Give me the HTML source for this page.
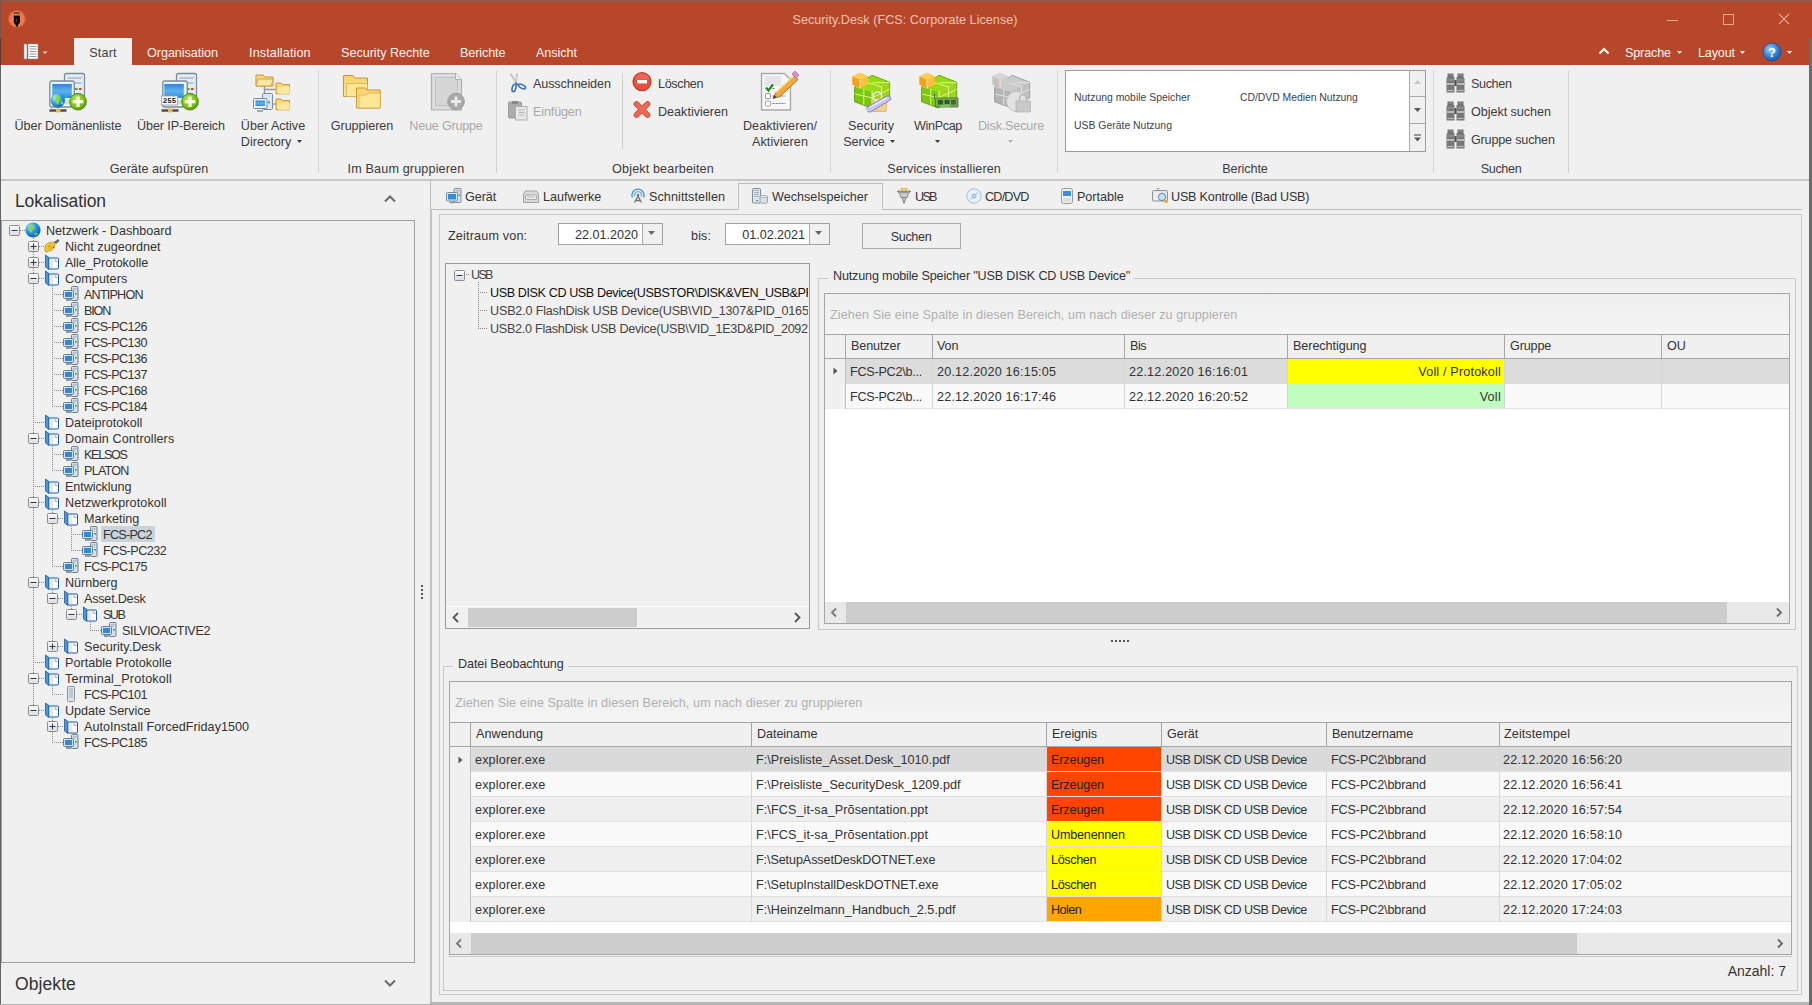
<!DOCTYPE html><html><head><meta charset="utf-8"><style>
html,body{margin:0;padding:0;width:1812px;height:1005px;overflow:hidden;background:#f0f0f0;font-family:"Liberation Sans", sans-serif;}
</style></head><body>
<div style="position:absolute;left:0px;top:0px;width:1812px;height:65px;background:#b7472a;"></div>
<div style="position:absolute;left:0px;top:0px;width:1812px;height:1px;background:#85604f;"></div>
<div style="position:absolute;left:0px;top:1px;width:1812px;height:1px;background:#a8503a;"></div>
<svg style="position:absolute;left:6px;top:8px;" width="22" height="22" viewBox="0 0 22 22"><circle cx="10.9" cy="10.9" r="9" fill="#d95a2e"/><circle cx="10.9" cy="10.9" r="7.8" fill="#ec7a4e"/><path d="M8.2 4h5.3v4H8.2z" fill="#7a4530"/><path d="M9 6h1.5v1H9zM11.2 6h1.5v1h-1.5z" fill="#f3c0a0"/><path d="M7.8 8h6.1v6.5l-1.6 2.2-1.4 2.8-1.4-2.8-1.7-2.2z" fill="#0a0503"/><path d="M10.6 10.5v3" stroke="#8a6a40" stroke-width="0.7"/></svg>
<div style="position:absolute;left:905px;transform:translateX(-50%);top:13px;font-size:12.6px;line-height:14px;color:#f1c3ae;white-space:nowrap;font-weight:normal;letter-spacing:0.032px;">Security.Desk (FCS: Corporate License)</div>
<div style="position:absolute;left:1667px;top:20px;width:11px;height:1px;background:#e9a58c;"></div>
<div style="position:absolute;left:1723px;top:14px;width:11px;height:11px;box-sizing:border-box;border:1px solid #e9a58c;background:transparent;"></div>
<svg style="position:absolute;left:1778px;top:13px;" width="12" height="12" viewBox="0 0 12 12"><path d="M1 1L11 11M11 1L1 11" stroke="#e9a58c" stroke-width="1.1"/></svg>
<svg style="position:absolute;left:22px;top:43px;" width="26" height="18" viewBox="0 0 26 18"><rect x="2" y="1" width="3" height="15" fill="#fff" stroke="#8a8a8a" stroke-width="0.6"/><rect x="6" y="1" width="10" height="15" fill="#fff" stroke="#8a8a8a" stroke-width="0.6"/><path d="M7.5 3.5h7M7.5 6h7M7.5 8.5h7M7.5 11h7M7.5 13.5h7" stroke="#8c8c8c" stroke-width="0.9"/><path d="M20.5 8.5h5l-2.5 2.5z" fill="#f5d5c8"/></svg>
<div style="position:absolute;left:74px;top:38px;width:58px;height:27px;background:#f0f0f0;"></div>
<div style="position:absolute;left:103px;transform:translateX(-50%);top:46px;font-size:12.6px;line-height:14px;color:#444;white-space:nowrap;font-weight:normal;letter-spacing:0.175px;">Start</div>
<div style="position:absolute;left:147px;top:46px;font-size:12.6px;line-height:14px;color:#fff3ee;white-space:nowrap;font-weight:normal;letter-spacing:-0.036px;">Organisation</div>
<div style="position:absolute;left:249px;top:46px;font-size:12.6px;line-height:14px;color:#fff3ee;white-space:nowrap;font-weight:normal;letter-spacing:0.127px;">Installation</div>
<div style="position:absolute;left:341px;top:46px;font-size:12.6px;line-height:14px;color:#fff3ee;white-space:nowrap;font-weight:normal;letter-spacing:-0.007px;">Security Rechte</div>
<div style="position:absolute;left:460px;top:46px;font-size:12.6px;line-height:14px;color:#fff3ee;white-space:nowrap;font-weight:normal;letter-spacing:-0.100px;">Berichte</div>
<div style="position:absolute;left:536px;top:46px;font-size:12.6px;line-height:14px;color:#fff3ee;white-space:nowrap;font-weight:normal;letter-spacing:-0.050px;">Ansicht</div>
<svg style="position:absolute;left:1598px;top:47px;" width="12" height="8" viewBox="0 0 12 8"><path d="M1.5 6.5L6 2l4.5 4.5" stroke="#fff" stroke-width="2" fill="none"/></svg>
<div style="position:absolute;left:1625px;top:46px;font-size:12.6px;line-height:14px;color:#fff3ee;white-space:nowrap;font-weight:normal;letter-spacing:-0.150px;">Sprache</div>
<svg style="position:absolute;left:1677px;top:51px;" width="5" height="3" viewBox="0 0 5 3"><path d="M0 0h5L2.5 3z" fill="#fff3ee"/></svg>
<div style="position:absolute;left:1698px;top:46px;font-size:12.6px;line-height:14px;color:#fff3ee;white-space:nowrap;font-weight:normal;letter-spacing:-0.160px;">Layout</div>
<svg style="position:absolute;left:1740px;top:51px;" width="5" height="3" viewBox="0 0 5 3"><path d="M0 0h5L2.5 3z" fill="#fff3ee"/></svg>
<svg style="position:absolute;left:1762px;top:42px;" width="20" height="20" viewBox="0 0 20 20"><defs><radialGradient id="hg" cx="40%" cy="35%" r="70%"><stop offset="0" stop-color="#9fd0ff"/><stop offset="0.6" stop-color="#2f7fd8"/><stop offset="1" stop-color="#14509e"/></radialGradient></defs><circle cx="10" cy="10" r="9" fill="url(#hg)" stroke="#1d4f8f" stroke-width="0.8"/><text x="10" y="14.5" font-size="13" font-weight="bold" text-anchor="middle" fill="#fff" font-family="Liberation Sans">?</text></svg>
<svg style="position:absolute;left:1787px;top:51px;" width="5" height="3" viewBox="0 0 5 3"><path d="M0 0h5L2.5 3z" fill="#fff3ee"/></svg>
<div style="position:absolute;left:0px;top:65px;width:1812px;height:114px;background:#f0f0f0;"></div>
<div style="position:absolute;left:0px;top:179px;width:1812px;height:2px;background:#c6c6c6;"></div>
<div style="position:absolute;left:318px;top:71px;width:1px;height:102px;background:#d2d2d2;"></div>
<div style="position:absolute;left:496px;top:71px;width:1px;height:102px;background:#d2d2d2;"></div>
<div style="position:absolute;left:830px;top:71px;width:1px;height:102px;background:#d2d2d2;"></div>
<div style="position:absolute;left:1057px;top:71px;width:1px;height:102px;background:#d2d2d2;"></div>
<div style="position:absolute;left:1433px;top:71px;width:1px;height:102px;background:#d2d2d2;"></div>
<div style="position:absolute;left:1568px;top:71px;width:1px;height:102px;background:#d2d2d2;"></div>
<div style="position:absolute;left:622px;top:73px;width:1px;height:77px;background:#cfcfcf;"></div>
<div style="position:absolute;left:159px;transform:translateX(-50%);top:162px;font-size:12.6px;line-height:14px;color:#3c3c3c;white-space:nowrap;font-weight:normal;letter-spacing:0.027px;">Geräte aufspüren</div>
<div style="position:absolute;left:406px;transform:translateX(-50%);top:162px;font-size:12.6px;line-height:14px;color:#3c3c3c;white-space:nowrap;font-weight:normal;letter-spacing:0.153px;">Im Baum gruppieren</div>
<div style="position:absolute;left:663px;transform:translateX(-50%);top:162px;font-size:12.6px;line-height:14px;color:#3c3c3c;white-space:nowrap;font-weight:normal;letter-spacing:0.138px;">Objekt bearbeiten</div>
<div style="position:absolute;left:944px;transform:translateX(-50%);top:162px;font-size:12.6px;line-height:14px;color:#3c3c3c;white-space:nowrap;font-weight:normal;letter-spacing:0.080px;">Services installieren</div>
<div style="position:absolute;left:1245px;transform:translateX(-50%);top:162px;font-size:12.6px;line-height:14px;color:#3c3c3c;white-space:nowrap;font-weight:normal;letter-spacing:-0.100px;">Berichte</div>
<div style="position:absolute;left:1501px;transform:translateX(-50%);top:162px;font-size:12.6px;line-height:14px;color:#3c3c3c;white-space:nowrap;font-weight:normal;letter-spacing:-0.360px;">Suchen</div>
<div style="position:absolute;left:68px;transform:translateX(-50%);top:119px;font-size:12.6px;line-height:14px;color:#3c3c3c;white-space:nowrap;font-weight:normal;letter-spacing:-0.056px;">Über Domänenliste</div>
<div style="position:absolute;left:181px;transform:translateX(-50%);top:119px;font-size:12.6px;line-height:14px;color:#3c3c3c;white-space:nowrap;font-weight:normal;letter-spacing:-0.114px;">Über IP-Bereich</div>
<div style="position:absolute;left:273px;transform:translateX(-50%);top:119px;font-size:12.6px;line-height:14px;color:#3c3c3c;white-space:nowrap;font-weight:normal;letter-spacing:-0.010px;">Über Active</div>
<div style="position:absolute;left:266px;transform:translateX(-50%);top:135px;font-size:12.6px;line-height:14px;color:#3c3c3c;white-space:nowrap;font-weight:normal;">Directory</div>
<div style="position:absolute;left:362px;transform:translateX(-50%);top:119px;font-size:12.6px;line-height:14px;color:#3c3c3c;white-space:nowrap;font-weight:normal;letter-spacing:-0.056px;">Gruppieren</div>
<div style="position:absolute;left:446px;transform:translateX(-50%);top:119px;font-size:12.6px;line-height:14px;color:#a8a8a8;white-space:nowrap;font-weight:normal;letter-spacing:-0.210px;">Neue Gruppe</div>
<div style="position:absolute;left:533px;top:77px;font-size:12.6px;line-height:14px;color:#3c3c3c;white-space:nowrap;font-weight:normal;letter-spacing:-0.109px;">Ausschneiden</div>
<div style="position:absolute;left:533px;top:105px;font-size:12.6px;line-height:14px;color:#a8a8a8;white-space:nowrap;font-weight:normal;letter-spacing:-0.143px;">Einfügen</div>
<div style="position:absolute;left:658px;top:77px;font-size:12.6px;line-height:14px;color:#3c3c3c;white-space:nowrap;font-weight:normal;letter-spacing:-0.350px;">Löschen</div>
<div style="position:absolute;left:658px;top:105px;font-size:12.6px;line-height:14px;color:#3c3c3c;white-space:nowrap;font-weight:normal;letter-spacing:0.000px;">Deaktivieren</div>
<div style="position:absolute;left:780px;transform:translateX(-50%);top:119px;font-size:12.6px;line-height:14px;color:#3c3c3c;white-space:nowrap;font-weight:normal;letter-spacing:0.042px;">Deaktivieren/</div>
<div style="position:absolute;left:780px;transform:translateX(-50%);top:135px;font-size:12.6px;line-height:14px;color:#3c3c3c;white-space:nowrap;font-weight:normal;letter-spacing:0.078px;">Aktivieren</div>
<div style="position:absolute;left:871px;transform:translateX(-50%);top:119px;font-size:12.6px;line-height:14px;color:#3c3c3c;white-space:nowrap;font-weight:normal;letter-spacing:0.071px;">Security</div>
<div style="position:absolute;left:864px;transform:translateX(-50%);top:135px;font-size:12.6px;line-height:14px;color:#3c3c3c;white-space:nowrap;font-weight:normal;letter-spacing:-0.083px;">Service</div>
<div style="position:absolute;left:938px;transform:translateX(-50%);top:119px;font-size:12.6px;line-height:14px;color:#3c3c3c;white-space:nowrap;font-weight:normal;letter-spacing:-0.333px;">WinPcap</div>
<div style="position:absolute;left:1011px;transform:translateX(-50%);top:119px;font-size:12.6px;line-height:14px;color:#a8a8a8;white-space:nowrap;font-weight:normal;letter-spacing:-0.160px;">Disk.Secure</div>
<svg style="position:absolute;left:297px;top:140px;" width="5" height="3" viewBox="0 0 5 3"><path d="M0 0h5L2.5 3z" fill="#3c3c3c"/></svg>
<svg style="position:absolute;left:890px;top:140px;" width="5" height="3" viewBox="0 0 5 3"><path d="M0 0h5L2.5 3z" fill="#3c3c3c"/></svg>
<svg style="position:absolute;left:935px;top:140px;" width="5" height="3" viewBox="0 0 5 3"><path d="M0 0h5L2.5 3z" fill="#3c3c3c"/></svg>
<svg style="position:absolute;left:1008px;top:140px;" width="5" height="3" viewBox="0 0 5 3"><path d="M0 0h5L2.5 3z" fill="#b0b0b0"/></svg>
<div style="position:absolute;left:1065px;top:70px;width:361px;height:82px;box-sizing:border-box;border:1px solid #9c9c9c;background:#fff;"></div>
<div style="position:absolute;left:1410px;top:71px;width:15px;height:80px;background:#f0f0f0;"></div>
<div style="position:absolute;left:1409px;top:71px;width:1px;height:80px;background:#a8a8a8;"></div>
<div style="position:absolute;left:1410px;top:96px;width:15px;height:1px;background:#a8a8a8;"></div>
<div style="position:absolute;left:1410px;top:123px;width:15px;height:1px;background:#a8a8a8;"></div>
<svg style="position:absolute;left:1414px;top:80px;" width="7" height="4" viewBox="0 0 7 4"><path d="M0 4h7L3.5 0z" fill="#c4c4c4"/></svg>
<svg style="position:absolute;left:1414px;top:108px;" width="7" height="4" viewBox="0 0 7 4"><path d="M0 0h7L3.5 4z" fill="#5a5a5a"/></svg>
<svg style="position:absolute;left:1414px;top:134px;" width="7" height="8" viewBox="0 0 7 8"><path d="M0 1h7" stroke="#5a5a5a" stroke-width="1.2"/><path d="M0 3.5h7L3.5 7.5z" fill="#5a5a5a"/></svg>
<div style="position:absolute;left:1074px;top:92px;font-size:10.4px;line-height:11px;color:#3b4150;white-space:nowrap;font-weight:normal;letter-spacing:0.009px;">Nutzung mobile Speicher</div>
<div style="position:absolute;left:1240px;top:92px;font-size:10.4px;line-height:11px;color:#3b4150;white-space:nowrap;font-weight:normal;letter-spacing:-0.025px;">CD/DVD Medien Nutzung</div>
<div style="position:absolute;left:1074px;top:120px;font-size:10.4px;line-height:11px;color:#3b4150;white-space:nowrap;font-weight:normal;letter-spacing:0.018px;">USB Geräte Nutzung</div>
<div style="position:absolute;left:1471px;top:77px;font-size:12.6px;line-height:14px;color:#3c3c3c;white-space:nowrap;font-weight:normal;letter-spacing:-0.360px;">Suchen</div>
<div style="position:absolute;left:1471px;top:105px;font-size:12.6px;line-height:14px;color:#3c3c3c;white-space:nowrap;font-weight:normal;letter-spacing:-0.042px;">Objekt suchen</div>
<div style="position:absolute;left:1471px;top:133px;font-size:12.6px;line-height:14px;color:#3c3c3c;white-space:nowrap;font-weight:normal;letter-spacing:-0.183px;">Gruppe suchen</div>
<svg width="0" height="0" style="position:absolute"><defs>
<linearGradient id="scr" x1="0" y1="0" x2="0" y2="1"><stop offset="0" stop-color="#2f86da"/><stop offset="0.5" stop-color="#5fb0ee"/><stop offset="1" stop-color="#2a90e0"/></linearGradient>
<radialGradient id="plus" cx="40%" cy="35%" r="70%"><stop offset="0" stop-color="#b4e64a"/><stop offset="0.7" stop-color="#78bd15"/><stop offset="1" stop-color="#4f8f0c"/></radialGradient>
<linearGradient id="fold" x1="0" y1="0" x2="0" y2="1"><stop offset="0" stop-color="#f7d36a"/><stop offset="1" stop-color="#fbe48f"/></linearGradient>
<radialGradient id="glb" cx="35%" cy="30%" r="75%"><stop offset="0" stop-color="#c7f3ff"/><stop offset="0.5" stop-color="#34a6de"/><stop offset="1" stop-color="#0f64a8"/></radialGradient>
</defs></svg>
<svg style="position:absolute;left:44px;top:68px;" width="50" height="48" viewBox="0 0 50 48"><rect x="20.5" y="5.5" width="20" height="30" rx="2" fill="#e4ecf3" stroke="#7d8b99" stroke-width="1.3"/><path d="M23.5 10h14M23.5 15h14" stroke="#a9b9c8" stroke-width="1.6"/><rect x="31" y="20" width="2.6" height="2" fill="#3cae2c"/><rect x="35" y="20" width="2.6" height="2" fill="#d23a3a"/><rect x="5.8" y="13" width="24.5" height="26" rx="2" fill="#e8f1f8" stroke="#7d8b99" stroke-width="1.3"/><rect x="8.3" y="16" width="19.5" height="14" fill="url(#scr)"/><rect x="9" y="32" width="18" height="4" fill="#d5dde4"/><path d="M5.5 42.5h17" stroke="#555" stroke-width="2.6"/><rect x="12" y="40.5" width="4.5" height="4" rx="1" fill="#f0b54a"/><circle cx="13.8" cy="32.5" r="7.2" fill="url(#glb)"/><path d="M12 26.5c2.5 1 4 3 3.5 5.5-1 1.5-.5 3.5-2 4.5-1.5-1-2.5-3-2-5-.8-2 0-3.5.5-5z" fill="#8fdc24"/><path d="M17 33c1.5.5 2.5 1.5 2.5 3-1 .5-2 .5-2.5 0z" fill="#8fdc24"/><circle cx="34" cy="33.7" r="8.3" fill="url(#plus)" stroke="#4d8a0c" stroke-width="1"/><path d="M34 28.5v10.5M28.8 33.7h10.5" stroke="#fbffe8" stroke-width="3.2"/></svg>
<svg style="position:absolute;left:156px;top:68px;" width="50" height="48" viewBox="0 0 50 48"><rect x="20.5" y="5.5" width="20" height="30" rx="2" fill="#e4ecf3" stroke="#7d8b99" stroke-width="1.3"/><path d="M23.5 10h14M23.5 15h14" stroke="#a9b9c8" stroke-width="1.6"/><rect x="31" y="20" width="2.6" height="2" fill="#3cae2c"/><rect x="35" y="20" width="2.6" height="2" fill="#d23a3a"/><rect x="6.8" y="13" width="24.5" height="26" rx="2" fill="#e8f1f8" stroke="#7d8b99" stroke-width="1.3"/><rect x="8.3" y="16" width="19.5" height="14" fill="url(#scr)"/><rect x="9" y="32" width="18" height="4" fill="#d5dde4"/><path d="M5.5 42.5h17" stroke="#555" stroke-width="2.6"/><rect x="12" y="40.5" width="4.5" height="4" rx="1" fill="#f0b54a"/><rect x="5.5" y="28" width="16" height="9" fill="#fff" stroke="#999" stroke-width="0.8"/><text x="13.5" y="35.3" font-size="7.5" font-weight="bold" text-anchor="middle" fill="#222" font-family="Liberation Mono">255</text><circle cx="34" cy="33.7" r="8.3" fill="url(#plus)" stroke="#4d8a0c" stroke-width="1"/><path d="M34 28.5v10.5M28.8 33.7h10.5" stroke="#fbffe8" stroke-width="3.2"/></svg>
<svg style="position:absolute;left:248px;top:68px;" width="50" height="48" viewBox="0 0 50 48"><path d="M16.5 18v7.5M16.5 21.5h11M22 36h5.7" stroke="#9a9a9a" stroke-width="1.5"/><path d="M8 7h7l2 2h8v9H8z" fill="url(#fold)" stroke="#c9963a" stroke-width="1"/><path d="M10 11h15.5l-2.5 7H8z" fill="#fbe7a0" stroke="#c9963a" stroke-width="0.8"/><path d="M28 15h5l1.5 1.5h7v9.3H28z" fill="url(#fold)" stroke="#c9963a" stroke-width="1"/><path d="M30.5 19h11.2v6.8H30.5z" fill="#fde9a0"/><path d="M28 31h5l1.5 1.5h7v9.3H28z" fill="url(#fold)" stroke="#c9963a" stroke-width="1"/><path d="M30.5 35h11.2v6.8H30.5z" fill="#fde9a0"/><rect x="14.5" y="25.5" width="10" height="16" rx="1" fill="#dfe7ee" stroke="#7d8b99" stroke-width="1"/><rect x="20" y="33.5" width="2" height="1.8" fill="#3cae2c"/><rect x="5.5" y="30.5" width="13.5" height="10" rx="1" fill="#e8f1f8" stroke="#7d8b99" stroke-width="1"/><rect x="7.5" y="32.5" width="9.5" height="5.5" fill="url(#scr)"/><path d="M9 43h6" stroke="#8a9aaa" stroke-width="1.6"/></svg>
<svg style="position:absolute;left:338px;top:68px;" width="50" height="48" viewBox="0 0 50 48"><path d="M5.5 7.5h9.5l1.5 2.5h13v18.5h-24z" fill="url(#fold)" stroke="#c9963a" stroke-width="1"/><path d="M8.5 15.5h21v13h-21z" fill="#fde795" stroke="#d0a040" stroke-width="0.6"/><path d="M18.5 20h9l1.5 2h13.3v18H18.5z" fill="url(#fold)" stroke="#c9963a" stroke-width="1"/><path d="M21 27h7.5l1.5-2h12.3v15H21z" fill="#fde795" stroke="#d0a040" stroke-width="0.6"/></svg>
<svg style="position:absolute;left:424px;top:68px;" width="50" height="48" viewBox="0 0 50 48"><path d="M7.5 5.5h24l6 6v30.5h-30z" fill="#dcdcdc" stroke="#b0b0b0" stroke-width="1.2"/><rect x="11.5" y="9.5" width="22" height="28" fill="#d6d6d6" stroke="#bcbcbc" stroke-width="0.8"/><path d="M31.5 5.5v6h6" fill="#eee" stroke="#b0b0b0"/><circle cx="32" cy="33.5" r="8.3" fill="#a9a9a9" stroke="#999"/><path d="M32 28.5v10M27 33.5h10" stroke="#eaeaea" stroke-width="2.8"/></svg>
<svg style="position:absolute;left:755px;top:68px;" width="50" height="48" viewBox="0 0 50 48"><path d="M6.5 5.5h23l6 6v30.5h-29z" fill="#f6f7f8" stroke="#a8a8a8" stroke-width="1.4"/><path d="M9.5 8h17v10h-17z" fill="#e3e5e8"/><path d="M11 19.5l2.5 3 4.5-6" stroke="#1f8a1f" stroke-width="2.2" fill="none"/><rect x="10.5" y="25.5" width="5" height="5" rx="0.8" fill="#fff" stroke="#888" stroke-width="0.9"/><rect x="10.5" y="33" width="5" height="5" rx="0.8" fill="#fff" stroke="#999" stroke-width="0.9"/><path d="M17.5 20.5h3M17.5 28h13M17.5 35.5h13" stroke="#666" stroke-width="0.9" stroke-dasharray="2 1"/><path d="M18 30.5l3-6 18-17 4 4-18 17z" fill="#f4a93a" stroke="#8a5a10" stroke-width="0.8"/><path d="M21 24.5l18-17" stroke="#ffd98a" stroke-width="1.4"/><path d="M37 6l3-3 4 4-3 3z" fill="#d98ad8" stroke="#a860a8" stroke-width="0.6"/><path d="M18 30.5l1.5-3.3 2 2z" fill="#333"/></svg>
<svg style="position:absolute;left:846px;top:68px;" width="50" height="48" viewBox="0 0 50 48"><path d="M8.6 19L26 7.3 43.7 14.2 26.3 23.5z" fill="#97dc10"/><path d="M8.6 19v14.8L25.5 40V23.5z" fill="#7cc60e"/><path d="M25.5 23.5L43.7 14.2v15.5L25.5 40z" fill="#9fd41a"/><path d="M8.6 19L26 7.3 43.7 14.2v15.5L25.5 40 8.6 33.8z" fill="none" stroke="#5d9e0a" stroke-width="0.9"/><path d="M17.8 21v15.8M35.5 18.5v16M26.5 14.8l17 -0.3M9 26l16.8 3.8 17.9-8.5M17 13.3l18.3 5.5M26.3 23.5V40" stroke="#d8f88a" stroke-width="1" fill="none"/><path d="M6.3 8.5L14 4.8l8 3.7v8.3L14 20.2l-7.7-3.4z" fill="#f4a21e"/><path d="M14 11.8l8-3.3v8.3L14 20.2z" fill="#fcbf3e"/><path d="M6.3 8.5L14 4.8l8 3.7-8 3.3z" fill="#ffd055"/><path d="M14 11.8v8.4" stroke="#ffeab0" stroke-width="1"/><path d="M24.5 36.5l4.5-6h12.5l-1.5 13H27z" fill="#f6cf8c" stroke="#c9a060" stroke-width="0.6"/><circle cx="31.5" cy="28.3" r="4.3" fill="none" stroke="#e8e8e8" stroke-width="1.6"/><path d="M20.5 39.5l19.5-11c2.5-1.4 5.5.4 4.8 3L25.5 43.5c-2.5 1.4-6 .3-5-4z" fill="#c6c6f4" stroke="#6e6ea0" stroke-width="0.8"/><path d="M23.5 39.5l17.5-9.8" stroke="#ececff" stroke-width="1.4"/><path d="M20.5 39.5l-1.5 2.5 3 2z" fill="#e0e0e0"/></svg>
<svg style="position:absolute;left:913px;top:68px;" width="50" height="48" viewBox="0 0 50 48"><path d="M8.6 19L26 7.3 43.7 14.2 26.3 23.5z" fill="#97dc10"/><path d="M8.6 19v14.8L25.5 40V23.5z" fill="#7cc60e"/><path d="M25.5 23.5L43.7 14.2v15.5L25.5 40z" fill="#9fd41a"/><path d="M8.6 19L26 7.3 43.7 14.2v15.5L25.5 40 8.6 33.8z" fill="none" stroke="#5d9e0a" stroke-width="0.9"/><path d="M17.8 21v15.8M35.5 18.5v16M26.5 14.8l17 -0.3M9 26l16.8 3.8 17.9-8.5M17 13.3l18.3 5.5M26.3 23.5V40" stroke="#d8f88a" stroke-width="1" fill="none"/><path d="M6.3 8.5L14 4.8l8 3.7v8.3L14 20.2l-7.7-3.4z" fill="#f4a21e"/><path d="M14 11.8l8-3.3v8.3L14 20.2z" fill="#fcbf3e"/><path d="M6.3 8.5L14 4.8l8 3.7-8 3.3z" fill="#ffd055"/><path d="M14 11.8v8.4" stroke="#ffeab0" stroke-width="1"/><path d="M22.5 30h22.5v9H22.5z" fill="#6fae4a" stroke="#3a6e28" stroke-width="0.8"/><path d="M25 32h5v4.5h-5zM31.5 32h5v4h-5z" fill="#2f5a30"/><path d="M38 32h5v4.5h-5z" fill="#555"/><path d="M21.5 26v4" stroke="#3a6e28" stroke-width="1"/><path d="M27 38h10" stroke="#9ad07a" stroke-width="1.2"/></svg>
<svg style="position:absolute;left:986px;top:68px;" width="50" height="48" viewBox="0 0 50 48"><path d="M8.6 19L26 7.3 43.7 14.2 26.3 23.5z" fill="#cbcbcb"/><path d="M8.6 19v14.8L25.5 40V23.5z" fill="#b4b4b4"/><path d="M25.5 23.5L43.7 14.2v15.5L25.5 40z" fill="#bfbfbf"/><path d="M8.6 19L26 7.3 43.7 14.2v15.5L25.5 40 8.6 33.8z" fill="none" stroke="#9c9c9c" stroke-width="0.9"/><path d="M17.8 21v15.8M35.5 18.5v16M26.5 14.8l17 -0.3M9 26l16.8 3.8 17.9-8.5M17 13.3l18.3 5.5M26.3 23.5V40" stroke="#e2e2e2" stroke-width="1" fill="none"/><path d="M6.3 8.5L14 4.8l8 3.7v8.3L14 20.2l-7.7-3.4z" fill="#c2c2c2"/><path d="M14 11.8l8-3.3v8.3L14 20.2z" fill="#cdcdcd"/><path d="M6.3 8.5L14 4.8l8 3.7-8 3.3z" fill="#d6d6d6"/><path d="M14 11.8v8.4" stroke="#ffeab0" stroke-width="1"/><circle cx="30.5" cy="33.5" r="10" fill="#e2e2e2" stroke="#c4c4c4"/><path d="M30 33h14.5v11H30z" fill="#c9c9c9" stroke="#b0b0b0" stroke-width="0.7"/><path d="M33.5 33v-3.2a3.8 3.8 0 0 1 7.5 0V33" fill="none" stroke="#bdbdbd" stroke-width="1.6"/></svg>
<svg style="position:absolute;left:504px;top:70px;" width="28" height="54" viewBox="0 0 28 54"><path d="M6.5 3.5l6 10M13 3.5l-1 10" stroke="#c9c9c9" stroke-width="2"/><ellipse cx="10" cy="18" rx="1.8" ry="3.8" fill="none" stroke="#3b74b8" stroke-width="1.6" transform="rotate(15 10 18)"/><ellipse cx="18" cy="16.5" rx="3.8" ry="1.8" fill="none" stroke="#3b74b8" stroke-width="1.6" transform="rotate(25 18 16.5)"/><path d="M11.5 12.5l3 3" stroke="#3b74b8" stroke-width="1.6"/><rect x="4.5" y="32" width="13" height="16" rx="1" fill="#ababab" stroke="#9a9a9a"/><rect x="8" y="31" width="6" height="3" fill="#8a8a8a"/><rect x="11.5" y="36.5" width="11.5" height="13.5" fill="#e6e6e6" stroke="#b0b0b0"/><path d="M14.5 40h6M14.5 42.5h6M14.5 45h6" stroke="#aaa" stroke-width="0.8"/></svg>
<svg style="position:absolute;left:630px;top:70px;" width="26" height="54" viewBox="0 0 26 54"><circle cx="12" cy="11.7" r="9" fill="#e8503c" stroke="#c0392b" stroke-width="1.2"/><path d="M12 3.5a8 8 0 0 1 7.7 6H4.3A8 8 0 0 1 12 3.5z" fill="#f07565" opacity="0.6"/><rect x="7" y="10" width="10" height="3.4" fill="#fff"/><path d="M6.5 34l11 11M17.5 34l-11 11" stroke="#c84a38" stroke-width="5.6" stroke-linecap="round"/><path d="M6.5 34l11 11M17.5 34l-11 11" stroke="#ea6a55" stroke-width="4" stroke-linecap="round"/></svg>
<svg style="position:absolute;left:1442px;top:70px;" width="26" height="26" viewBox="0 0 26 26"><path d="M5.5 7.5V3.5h6v4zM15.5 7.5V3.5h6v4z" fill="#6e6e6e"/><path d="M6.5 5h4M16.5 5h4" stroke="#a8a8a8" stroke-width="0.8"/><path d="M4.5 8.5l1-1.5h7v15.5h-8z" fill="#787878"/><path d="M14.5 7h7l1 1.5v14h-8z" fill="#787878"/><rect x="12.5" y="10" width="2" height="6" fill="#4e4e4e"/><path d="M5 14h7M15 14h7" stroke="#cfcfcf" stroke-width="1.3"/><path d="M5.5 20.5h6M15.5 20.5h6" stroke="#c4c4c4" stroke-width="1"/><path d="M5.5 10h6M15.5 10h6" stroke="#a0a0a0" stroke-width="1"/></svg>
<svg style="position:absolute;left:1442px;top:98px;" width="26" height="26" viewBox="0 0 26 26"><path d="M5.5 7.5V3.5h6v4zM15.5 7.5V3.5h6v4z" fill="#6e6e6e"/><path d="M6.5 5h4M16.5 5h4" stroke="#a8a8a8" stroke-width="0.8"/><path d="M4.5 8.5l1-1.5h7v15.5h-8z" fill="#787878"/><path d="M14.5 7h7l1 1.5v14h-8z" fill="#787878"/><rect x="12.5" y="10" width="2" height="6" fill="#4e4e4e"/><path d="M5 14h7M15 14h7" stroke="#cfcfcf" stroke-width="1.3"/><path d="M5.5 20.5h6M15.5 20.5h6" stroke="#c4c4c4" stroke-width="1"/><path d="M5.5 10h6M15.5 10h6" stroke="#a0a0a0" stroke-width="1"/></svg>
<svg style="position:absolute;left:1442px;top:126px;" width="26" height="26" viewBox="0 0 26 26"><path d="M5.5 7.5V3.5h6v4zM15.5 7.5V3.5h6v4z" fill="#6e6e6e"/><path d="M6.5 5h4M16.5 5h4" stroke="#a8a8a8" stroke-width="0.8"/><path d="M4.5 8.5l1-1.5h7v15.5h-8z" fill="#787878"/><path d="M14.5 7h7l1 1.5v14h-8z" fill="#787878"/><rect x="12.5" y="10" width="2" height="6" fill="#4e4e4e"/><path d="M5 14h7M15 14h7" stroke="#cfcfcf" stroke-width="1.3"/><path d="M5.5 20.5h6M15.5 20.5h6" stroke="#c4c4c4" stroke-width="1"/><path d="M5.5 10h6M15.5 10h6" stroke="#a0a0a0" stroke-width="1"/></svg>
<svg width="0" height="0" style="position:absolute"><defs>
<symbol id="t_dev" viewBox="0 0 16 16"><rect x="8" y="0.5" width="7" height="14" rx="1" fill="#dbe4ec" stroke="#6f8193" stroke-width="0.9"/><path d="M9.5 2.5h4M9.5 4h4" stroke="#9aabbb" stroke-width="0.8"/><rect x="12.5" y="6.5" width="1.6" height="1.6" fill="#3cae2c"/><rect x="0.5" y="4.5" width="11" height="8.5" rx="1" fill="#d9ebf7" stroke="#6f8193" stroke-width="0.9"/><rect x="2" y="6" width="8" height="5.5" fill="#2b8fe0"/><path d="M3.5 14.5h5" stroke="#7e93a6" stroke-width="1.4"/></symbol>
<symbol id="t_drive" viewBox="0 0 16 16"><path d="M2.5 3h11l2 3v8.5H0.5V6z" fill="#dadada" stroke="#9a9a9a" stroke-width="0.9"/><rect x="2.5" y="7" width="11" height="4.5" rx="0.5" fill="#efefef" stroke="#9a9a9a" stroke-width="0.8"/><path d="M4 9h8" stroke="#b5b5b5" stroke-width="1"/></symbol>
<symbol id="t_iface" viewBox="0 0 16 16"><path d="M2.5 9.5a6 6 0 1 1 11 0" fill="none" stroke="#4e92d0" stroke-width="1.4"/><path d="M4.8 8.5a3.5 3.5 0 1 1 6.4 0" fill="none" stroke="#6aaae0" stroke-width="1.2"/><circle cx="8" cy="7" r="1.3" fill="#777"/><path d="M8 8l-3.5 6.5M8 8l3.5 6.5M5.5 12.5h5" stroke="#707070" stroke-width="1.3" fill="none"/></symbol>
<symbol id="t_wech" viewBox="0 0 16 16"><rect x="0.5" y="0.5" width="8" height="14.5" rx="1" fill="#dde6ee" stroke="#6f8193" stroke-width="0.9"/><path d="M2 2.5h5M2 4.5h5M2 6.5h5M2 8.5h5" stroke="#8fa3b5" stroke-width="0.8"/><rect x="4" y="12" width="2" height="1" fill="#3cae2c"/><path d="M8 8.5c0-1 7.5-1 7.5 0v6c0 1-7.5 1-7.5 0z" fill="#d8dfe6" stroke="#8a98a6" stroke-width="0.8"/><ellipse cx="11.75" cy="8.5" rx="3.75" ry="1" fill="#eef2f6" stroke="#8a98a6" stroke-width="0.6"/></symbol>
<symbol id="t_usb" viewBox="0 0 16 16"><rect x="5" y="0.5" width="6" height="2.5" fill="#f3d27a" stroke="#c9a040" stroke-width="0.6"/><path d="M1 3.5h14M2.5 2v3M13.5 2v3" stroke="#8a8a8a" stroke-width="1.2"/><path d="M3.5 4.5h9l-1 5h-7z" fill="#c8c8c8" stroke="#8a8a8a" stroke-width="0.9"/><path d="M6 9.5h4l-1 4h-2z" fill="#bbb" stroke="#8a8a8a" stroke-width="0.8"/><path d="M8 13.5v2" stroke="#555" stroke-width="1.2"/></symbol>
<symbol id="t_cd" viewBox="0 0 16 16"><circle cx="8" cy="8" r="7.2" fill="#e3f1fb" stroke="#9ab8d0" stroke-width="0.9"/><circle cx="8" cy="8" r="2" fill="#b9d7ee" stroke="#7fa4c4" stroke-width="0.7"/><path d="M4 11l2-1M12 5l-2 1" stroke="#c9a8d8" stroke-width="1"/></symbol>
<symbol id="t_port" viewBox="0 0 16 16"><rect x="2.5" y="0.5" width="11" height="15" rx="2" fill="#eef0f2" stroke="#8a8f96" stroke-width="0.9"/><rect x="4" y="3" width="8" height="5" fill="#3a8ee0"/><path d="M4.5 11h7M4.5 13h7" stroke="#a0a8b0" stroke-width="1" stroke-dasharray="1 1"/></symbol>
<symbol id="t_kontr" viewBox="0 0 16 16"><rect x="0.5" y="2.5" width="15" height="10.5" rx="1" fill="#e2e6ea" stroke="#7f8a94" stroke-width="0.9"/><path d="M2 5.5h2M5 5.5h2M2 8h2M5 8h2M2 10.5h5" stroke="#fff" stroke-width="1.2"/><path d="M5.5 2.5v-2h2" stroke="#7f8a94" stroke-width="0.8" fill="none"/><circle cx="10" cy="9" r="3.6" fill="#bfe6f8" stroke="#6f8193" stroke-width="1"/><circle cx="14.2" cy="13.6" r="1.6" fill="#f5a623"/></symbol>
</defs></svg>
<div style="position:absolute;left:15px;top:191px;font-size:17.5px;line-height:20px;color:#333;white-space:nowrap;font-weight:normal;letter-spacing:-0.127px;">Lokalisation</div>
<svg style="position:absolute;left:384px;top:195px;" width="12" height="8" viewBox="0 0 12 8"><path d="M1 6.5L6 1.5l5 5" stroke="#6a6a6a" stroke-width="2" fill="none"/></svg>
<div style="position:absolute;left:1px;top:220px;width:414px;height:743px;box-sizing:border-box;border:1px solid #a0a0a0;background:#f0f0f0;"></div>
<div style="position:absolute;left:15px;top:974px;font-size:17.5px;line-height:20px;color:#333;white-space:nowrap;font-weight:normal;letter-spacing:0.083px;">Objekte</div>
<svg style="position:absolute;left:384px;top:979px;" width="12" height="8" viewBox="0 0 12 8"><path d="M1 1.5L6 6.5l5-5" stroke="#6a6a6a" stroke-width="2" fill="none"/></svg>
<div style="position:absolute;left:421px;top:585px;width:2px;height:2px;background:#555;"></div>
<div style="position:absolute;left:421px;top:589px;width:2px;height:2px;background:#555;"></div>
<div style="position:absolute;left:421px;top:593px;width:2px;height:2px;background:#555;"></div>
<div style="position:absolute;left:421px;top:597px;width:2px;height:2px;background:#555;"></div>
<svg width="0" height="0" style="position:absolute"><defs>
<symbol id="globe" viewBox="0 0 16 16"><defs><radialGradient id="gg" cx="35%" cy="30%" r="75%"><stop offset="0" stop-color="#bfefff"/><stop offset="0.45" stop-color="#2b9de0"/><stop offset="1" stop-color="#0b5aa8"/></radialGradient></defs><circle cx="8" cy="8" r="7.6" fill="url(#gg)"/><path d="M5 2.5c2 0 3 1 3.5 2.5-.5 1.5-1.5 2-1.5 4 0 1.2-1 2-1.5 1.5C5 9 4 7.5 4.5 5.5 4 4 4.3 3 5 2.5z" fill="#9bd531"/><path d="M9.5 11c1.5-.5 3-.2 3.5.5-.8 1.2-2 2-3 2.2-.5-.8-.8-1.8-.5-2.7z" fill="#7cc62a"/></symbol>
<symbol id="hand" viewBox="0 0 16 16"><path d="M1 8c1-2 3-3 5-3.5l3-.5 2 1-1 5-3 3H4l-1.5 1.5L1 13z" fill="#f2c531" stroke="#b8860b" stroke-width="0.7"/><path d="M10 4l4-3 1.5 2L12 6z" fill="#666"/><path d="M4 8h4M3.5 10h4" stroke="#c79412" stroke-width="0.7"/><path d="M9 9l1 1" stroke="#c00" stroke-width="1"/></symbol>
<symbol id="book" viewBox="0 0 16 16"><path d="M1.5 1v12l3.5 2.5V3.5z" fill="#4a9ad8" stroke="#1d5aa0" stroke-width="0.8"/><rect x="5" y="4" width="9.5" height="11" rx="1" fill="#fdfdfd" stroke="#1d5aa0" stroke-width="1"/><path d="M11 4.5v3h3" fill="#ddd" stroke="#8aa" stroke-width="0.6"/><path d="M5.5 5h4v9h-4z" fill="#e8e8e8"/></symbol>
<symbol id="pc" viewBox="0 0 16 16"><rect x="8.5" y="0.5" width="6.5" height="14" rx="1" fill="#d5e0ea" stroke="#60758a" stroke-width="0.9"/><path d="M10 2.5h3.5M10 4h3.5" stroke="#9ab" stroke-width="0.7"/><rect x="12" y="7" width="2" height="1.5" fill="#3bb030"/><rect x="0.5" y="4.5" width="10" height="8" rx="1" fill="#cfe3f2" stroke="#5d7288" stroke-width="0.9"/><rect x="2" y="6" width="7" height="5" fill="#2a8be0"/><path d="M3 14h5" stroke="#6a7f93" stroke-width="1.5"/></symbol>
<symbol id="server" viewBox="0 0 16 16"><rect x="4.5" y="0.5" width="7" height="15" rx="1" fill="#dde4ea" stroke="#7d8a96" stroke-width="0.9"/><path d="M6 3h4M6 5h4M6 7h4M6 9h4M6 11h4" stroke="#8d99a5" stroke-width="0.8"/></symbol>
<symbol id="expm" viewBox="0 0 11 11"><defs><linearGradient id="eg" x1="0" y1="0" x2="0" y2="1"><stop offset="0" stop-color="#fbfbfb"/><stop offset="1" stop-color="#dcdcdc"/></linearGradient></defs><rect x="0.5" y="0.5" width="10" height="10" rx="1" fill="url(#eg)" stroke="#8c8c8c"/><path d="M2.5 5.5h6" stroke="#1f3a6e" stroke-width="1"/></symbol>
<symbol id="expp" viewBox="0 0 11 11"><rect x="0.5" y="0.5" width="10" height="10" rx="1" fill="url(#eg)" stroke="#8c8c8c"/><path d="M2.5 5.5h6M5.5 2.5v6" stroke="#1f3a6e" stroke-width="1"/></symbol>
</defs></svg>
<svg style="position:absolute;left:0px;top:220px;" width="415" height="740" viewBox="0 0 415 740"><g fill="#8a8a8a" transform="translate(0,-220)"><rect x="20" y="230" width="1" height="1"/><rect x="22" y="230" width="1" height="1"/><rect x="24" y="230" width="1" height="1"/><rect x="33" y="238" width="1" height="1"/><rect x="33" y="240" width="1" height="1"/><rect x="33" y="242" width="1" height="1"/><rect x="33" y="244" width="1" height="1"/><rect x="33" y="246" width="1" height="1"/><rect x="33" y="248" width="1" height="1"/><rect x="33" y="250" width="1" height="1"/><rect x="33" y="252" width="1" height="1"/><rect x="33" y="254" width="1" height="1"/><rect x="33" y="256" width="1" height="1"/><rect x="33" y="258" width="1" height="1"/><rect x="33" y="260" width="1" height="1"/><rect x="33" y="262" width="1" height="1"/><rect x="33" y="264" width="1" height="1"/><rect x="33" y="266" width="1" height="1"/><rect x="33" y="268" width="1" height="1"/><rect x="33" y="270" width="1" height="1"/><rect x="33" y="272" width="1" height="1"/><rect x="33" y="274" width="1" height="1"/><rect x="33" y="276" width="1" height="1"/><rect x="33" y="278" width="1" height="1"/><rect x="33" y="280" width="1" height="1"/><rect x="33" y="282" width="1" height="1"/><rect x="33" y="284" width="1" height="1"/><rect x="33" y="286" width="1" height="1"/><rect x="33" y="288" width="1" height="1"/><rect x="33" y="290" width="1" height="1"/><rect x="33" y="292" width="1" height="1"/><rect x="33" y="294" width="1" height="1"/><rect x="33" y="296" width="1" height="1"/><rect x="33" y="298" width="1" height="1"/><rect x="33" y="300" width="1" height="1"/><rect x="33" y="302" width="1" height="1"/><rect x="33" y="304" width="1" height="1"/><rect x="33" y="306" width="1" height="1"/><rect x="33" y="308" width="1" height="1"/><rect x="33" y="310" width="1" height="1"/><rect x="33" y="312" width="1" height="1"/><rect x="33" y="314" width="1" height="1"/><rect x="33" y="316" width="1" height="1"/><rect x="33" y="318" width="1" height="1"/><rect x="33" y="320" width="1" height="1"/><rect x="33" y="322" width="1" height="1"/><rect x="33" y="324" width="1" height="1"/><rect x="33" y="326" width="1" height="1"/><rect x="33" y="328" width="1" height="1"/><rect x="33" y="330" width="1" height="1"/><rect x="33" y="332" width="1" height="1"/><rect x="33" y="334" width="1" height="1"/><rect x="33" y="336" width="1" height="1"/><rect x="33" y="338" width="1" height="1"/><rect x="33" y="340" width="1" height="1"/><rect x="33" y="342" width="1" height="1"/><rect x="33" y="344" width="1" height="1"/><rect x="33" y="346" width="1" height="1"/><rect x="33" y="348" width="1" height="1"/><rect x="33" y="350" width="1" height="1"/><rect x="33" y="352" width="1" height="1"/><rect x="33" y="354" width="1" height="1"/><rect x="33" y="356" width="1" height="1"/><rect x="33" y="358" width="1" height="1"/><rect x="33" y="360" width="1" height="1"/><rect x="33" y="362" width="1" height="1"/><rect x="33" y="364" width="1" height="1"/><rect x="33" y="366" width="1" height="1"/><rect x="33" y="368" width="1" height="1"/><rect x="33" y="370" width="1" height="1"/><rect x="33" y="372" width="1" height="1"/><rect x="33" y="374" width="1" height="1"/><rect x="33" y="376" width="1" height="1"/><rect x="33" y="378" width="1" height="1"/><rect x="33" y="380" width="1" height="1"/><rect x="33" y="382" width="1" height="1"/><rect x="33" y="384" width="1" height="1"/><rect x="33" y="386" width="1" height="1"/><rect x="33" y="388" width="1" height="1"/><rect x="33" y="390" width="1" height="1"/><rect x="33" y="392" width="1" height="1"/><rect x="33" y="394" width="1" height="1"/><rect x="33" y="396" width="1" height="1"/><rect x="33" y="398" width="1" height="1"/><rect x="33" y="400" width="1" height="1"/><rect x="33" y="402" width="1" height="1"/><rect x="33" y="404" width="1" height="1"/><rect x="33" y="406" width="1" height="1"/><rect x="33" y="408" width="1" height="1"/><rect x="33" y="410" width="1" height="1"/><rect x="33" y="412" width="1" height="1"/><rect x="33" y="414" width="1" height="1"/><rect x="33" y="416" width="1" height="1"/><rect x="33" y="418" width="1" height="1"/><rect x="33" y="420" width="1" height="1"/><rect x="33" y="422" width="1" height="1"/><rect x="33" y="424" width="1" height="1"/><rect x="33" y="426" width="1" height="1"/><rect x="33" y="428" width="1" height="1"/><rect x="33" y="430" width="1" height="1"/><rect x="33" y="432" width="1" height="1"/><rect x="33" y="434" width="1" height="1"/><rect x="33" y="436" width="1" height="1"/><rect x="33" y="438" width="1" height="1"/><rect x="33" y="440" width="1" height="1"/><rect x="33" y="442" width="1" height="1"/><rect x="33" y="444" width="1" height="1"/><rect x="33" y="446" width="1" height="1"/><rect x="33" y="448" width="1" height="1"/><rect x="33" y="450" width="1" height="1"/><rect x="33" y="452" width="1" height="1"/><rect x="33" y="454" width="1" height="1"/><rect x="33" y="456" width="1" height="1"/><rect x="33" y="458" width="1" height="1"/><rect x="33" y="460" width="1" height="1"/><rect x="33" y="462" width="1" height="1"/><rect x="33" y="464" width="1" height="1"/><rect x="33" y="466" width="1" height="1"/><rect x="33" y="468" width="1" height="1"/><rect x="33" y="470" width="1" height="1"/><rect x="33" y="472" width="1" height="1"/><rect x="33" y="474" width="1" height="1"/><rect x="33" y="476" width="1" height="1"/><rect x="33" y="478" width="1" height="1"/><rect x="33" y="480" width="1" height="1"/><rect x="33" y="482" width="1" height="1"/><rect x="33" y="484" width="1" height="1"/><rect x="33" y="486" width="1" height="1"/><rect x="33" y="488" width="1" height="1"/><rect x="33" y="490" width="1" height="1"/><rect x="33" y="492" width="1" height="1"/><rect x="33" y="494" width="1" height="1"/><rect x="33" y="496" width="1" height="1"/><rect x="33" y="498" width="1" height="1"/><rect x="33" y="500" width="1" height="1"/><rect x="33" y="502" width="1" height="1"/><rect x="33" y="504" width="1" height="1"/><rect x="33" y="506" width="1" height="1"/><rect x="33" y="508" width="1" height="1"/><rect x="33" y="510" width="1" height="1"/><rect x="33" y="512" width="1" height="1"/><rect x="33" y="514" width="1" height="1"/><rect x="33" y="516" width="1" height="1"/><rect x="33" y="518" width="1" height="1"/><rect x="33" y="520" width="1" height="1"/><rect x="33" y="522" width="1" height="1"/><rect x="33" y="524" width="1" height="1"/><rect x="33" y="526" width="1" height="1"/><rect x="33" y="528" width="1" height="1"/><rect x="33" y="530" width="1" height="1"/><rect x="33" y="532" width="1" height="1"/><rect x="33" y="534" width="1" height="1"/><rect x="33" y="536" width="1" height="1"/><rect x="33" y="538" width="1" height="1"/><rect x="33" y="540" width="1" height="1"/><rect x="33" y="542" width="1" height="1"/><rect x="33" y="544" width="1" height="1"/><rect x="33" y="546" width="1" height="1"/><rect x="33" y="548" width="1" height="1"/><rect x="33" y="550" width="1" height="1"/><rect x="33" y="552" width="1" height="1"/><rect x="33" y="554" width="1" height="1"/><rect x="33" y="556" width="1" height="1"/><rect x="33" y="558" width="1" height="1"/><rect x="33" y="560" width="1" height="1"/><rect x="33" y="562" width="1" height="1"/><rect x="33" y="564" width="1" height="1"/><rect x="33" y="566" width="1" height="1"/><rect x="33" y="568" width="1" height="1"/><rect x="33" y="570" width="1" height="1"/><rect x="33" y="572" width="1" height="1"/><rect x="33" y="574" width="1" height="1"/><rect x="33" y="576" width="1" height="1"/><rect x="33" y="578" width="1" height="1"/><rect x="33" y="580" width="1" height="1"/><rect x="33" y="582" width="1" height="1"/><rect x="33" y="584" width="1" height="1"/><rect x="33" y="586" width="1" height="1"/><rect x="33" y="588" width="1" height="1"/><rect x="33" y="590" width="1" height="1"/><rect x="33" y="592" width="1" height="1"/><rect x="33" y="594" width="1" height="1"/><rect x="33" y="596" width="1" height="1"/><rect x="33" y="598" width="1" height="1"/><rect x="33" y="600" width="1" height="1"/><rect x="33" y="602" width="1" height="1"/><rect x="33" y="604" width="1" height="1"/><rect x="33" y="606" width="1" height="1"/><rect x="33" y="608" width="1" height="1"/><rect x="33" y="610" width="1" height="1"/><rect x="33" y="612" width="1" height="1"/><rect x="33" y="614" width="1" height="1"/><rect x="33" y="616" width="1" height="1"/><rect x="33" y="618" width="1" height="1"/><rect x="33" y="620" width="1" height="1"/><rect x="33" y="622" width="1" height="1"/><rect x="33" y="624" width="1" height="1"/><rect x="33" y="626" width="1" height="1"/><rect x="33" y="628" width="1" height="1"/><rect x="33" y="630" width="1" height="1"/><rect x="33" y="632" width="1" height="1"/><rect x="33" y="634" width="1" height="1"/><rect x="33" y="636" width="1" height="1"/><rect x="33" y="638" width="1" height="1"/><rect x="33" y="640" width="1" height="1"/><rect x="33" y="642" width="1" height="1"/><rect x="33" y="644" width="1" height="1"/><rect x="33" y="646" width="1" height="1"/><rect x="33" y="648" width="1" height="1"/><rect x="33" y="650" width="1" height="1"/><rect x="33" y="652" width="1" height="1"/><rect x="33" y="654" width="1" height="1"/><rect x="33" y="656" width="1" height="1"/><rect x="33" y="658" width="1" height="1"/><rect x="33" y="660" width="1" height="1"/><rect x="33" y="662" width="1" height="1"/><rect x="33" y="664" width="1" height="1"/><rect x="33" y="666" width="1" height="1"/><rect x="33" y="668" width="1" height="1"/><rect x="33" y="670" width="1" height="1"/><rect x="33" y="672" width="1" height="1"/><rect x="33" y="674" width="1" height="1"/><rect x="33" y="676" width="1" height="1"/><rect x="33" y="678" width="1" height="1"/><rect x="33" y="680" width="1" height="1"/><rect x="33" y="682" width="1" height="1"/><rect x="33" y="684" width="1" height="1"/><rect x="33" y="686" width="1" height="1"/><rect x="33" y="688" width="1" height="1"/><rect x="33" y="690" width="1" height="1"/><rect x="33" y="692" width="1" height="1"/><rect x="33" y="694" width="1" height="1"/><rect x="33" y="696" width="1" height="1"/><rect x="33" y="698" width="1" height="1"/><rect x="33" y="700" width="1" height="1"/><rect x="33" y="702" width="1" height="1"/><rect x="33" y="704" width="1" height="1"/><rect x="33" y="706" width="1" height="1"/><rect x="33" y="708" width="1" height="1"/><rect x="33" y="710" width="1" height="1"/><rect x="39" y="246" width="1" height="1"/><rect x="41" y="246" width="1" height="1"/><rect x="43" y="246" width="1" height="1"/><rect x="39" y="262" width="1" height="1"/><rect x="41" y="262" width="1" height="1"/><rect x="43" y="262" width="1" height="1"/><rect x="39" y="278" width="1" height="1"/><rect x="41" y="278" width="1" height="1"/><rect x="43" y="278" width="1" height="1"/><rect x="52" y="286" width="1" height="1"/><rect x="52" y="288" width="1" height="1"/><rect x="52" y="290" width="1" height="1"/><rect x="52" y="292" width="1" height="1"/><rect x="52" y="294" width="1" height="1"/><rect x="52" y="296" width="1" height="1"/><rect x="52" y="298" width="1" height="1"/><rect x="52" y="300" width="1" height="1"/><rect x="52" y="302" width="1" height="1"/><rect x="52" y="304" width="1" height="1"/><rect x="52" y="306" width="1" height="1"/><rect x="52" y="308" width="1" height="1"/><rect x="52" y="310" width="1" height="1"/><rect x="52" y="312" width="1" height="1"/><rect x="52" y="314" width="1" height="1"/><rect x="52" y="316" width="1" height="1"/><rect x="52" y="318" width="1" height="1"/><rect x="52" y="320" width="1" height="1"/><rect x="52" y="322" width="1" height="1"/><rect x="52" y="324" width="1" height="1"/><rect x="52" y="326" width="1" height="1"/><rect x="52" y="328" width="1" height="1"/><rect x="52" y="330" width="1" height="1"/><rect x="52" y="332" width="1" height="1"/><rect x="52" y="334" width="1" height="1"/><rect x="52" y="336" width="1" height="1"/><rect x="52" y="338" width="1" height="1"/><rect x="52" y="340" width="1" height="1"/><rect x="52" y="342" width="1" height="1"/><rect x="52" y="344" width="1" height="1"/><rect x="52" y="346" width="1" height="1"/><rect x="52" y="348" width="1" height="1"/><rect x="52" y="350" width="1" height="1"/><rect x="52" y="352" width="1" height="1"/><rect x="52" y="354" width="1" height="1"/><rect x="52" y="356" width="1" height="1"/><rect x="52" y="358" width="1" height="1"/><rect x="52" y="360" width="1" height="1"/><rect x="52" y="362" width="1" height="1"/><rect x="52" y="364" width="1" height="1"/><rect x="52" y="366" width="1" height="1"/><rect x="52" y="368" width="1" height="1"/><rect x="52" y="370" width="1" height="1"/><rect x="52" y="372" width="1" height="1"/><rect x="52" y="374" width="1" height="1"/><rect x="52" y="376" width="1" height="1"/><rect x="52" y="378" width="1" height="1"/><rect x="52" y="380" width="1" height="1"/><rect x="52" y="382" width="1" height="1"/><rect x="52" y="384" width="1" height="1"/><rect x="52" y="386" width="1" height="1"/><rect x="52" y="388" width="1" height="1"/><rect x="52" y="390" width="1" height="1"/><rect x="52" y="392" width="1" height="1"/><rect x="52" y="394" width="1" height="1"/><rect x="52" y="396" width="1" height="1"/><rect x="52" y="398" width="1" height="1"/><rect x="52" y="400" width="1" height="1"/><rect x="52" y="402" width="1" height="1"/><rect x="52" y="404" width="1" height="1"/><rect x="52" y="406" width="1" height="1"/><rect x="52" y="294" width="1" height="1"/><rect x="54" y="294" width="1" height="1"/><rect x="56" y="294" width="1" height="1"/><rect x="58" y="294" width="1" height="1"/><rect x="60" y="294" width="1" height="1"/><rect x="62" y="294" width="1" height="1"/><rect x="52" y="310" width="1" height="1"/><rect x="54" y="310" width="1" height="1"/><rect x="56" y="310" width="1" height="1"/><rect x="58" y="310" width="1" height="1"/><rect x="60" y="310" width="1" height="1"/><rect x="62" y="310" width="1" height="1"/><rect x="52" y="326" width="1" height="1"/><rect x="54" y="326" width="1" height="1"/><rect x="56" y="326" width="1" height="1"/><rect x="58" y="326" width="1" height="1"/><rect x="60" y="326" width="1" height="1"/><rect x="62" y="326" width="1" height="1"/><rect x="52" y="342" width="1" height="1"/><rect x="54" y="342" width="1" height="1"/><rect x="56" y="342" width="1" height="1"/><rect x="58" y="342" width="1" height="1"/><rect x="60" y="342" width="1" height="1"/><rect x="62" y="342" width="1" height="1"/><rect x="52" y="358" width="1" height="1"/><rect x="54" y="358" width="1" height="1"/><rect x="56" y="358" width="1" height="1"/><rect x="58" y="358" width="1" height="1"/><rect x="60" y="358" width="1" height="1"/><rect x="62" y="358" width="1" height="1"/><rect x="52" y="374" width="1" height="1"/><rect x="54" y="374" width="1" height="1"/><rect x="56" y="374" width="1" height="1"/><rect x="58" y="374" width="1" height="1"/><rect x="60" y="374" width="1" height="1"/><rect x="62" y="374" width="1" height="1"/><rect x="52" y="390" width="1" height="1"/><rect x="54" y="390" width="1" height="1"/><rect x="56" y="390" width="1" height="1"/><rect x="58" y="390" width="1" height="1"/><rect x="60" y="390" width="1" height="1"/><rect x="62" y="390" width="1" height="1"/><rect x="52" y="406" width="1" height="1"/><rect x="54" y="406" width="1" height="1"/><rect x="56" y="406" width="1" height="1"/><rect x="58" y="406" width="1" height="1"/><rect x="60" y="406" width="1" height="1"/><rect x="62" y="406" width="1" height="1"/><rect x="33" y="422" width="1" height="1"/><rect x="35" y="422" width="1" height="1"/><rect x="37" y="422" width="1" height="1"/><rect x="39" y="422" width="1" height="1"/><rect x="41" y="422" width="1" height="1"/><rect x="43" y="422" width="1" height="1"/><rect x="39" y="438" width="1" height="1"/><rect x="41" y="438" width="1" height="1"/><rect x="43" y="438" width="1" height="1"/><rect x="52" y="446" width="1" height="1"/><rect x="52" y="448" width="1" height="1"/><rect x="52" y="450" width="1" height="1"/><rect x="52" y="452" width="1" height="1"/><rect x="52" y="454" width="1" height="1"/><rect x="52" y="456" width="1" height="1"/><rect x="52" y="458" width="1" height="1"/><rect x="52" y="460" width="1" height="1"/><rect x="52" y="462" width="1" height="1"/><rect x="52" y="464" width="1" height="1"/><rect x="52" y="466" width="1" height="1"/><rect x="52" y="468" width="1" height="1"/><rect x="52" y="470" width="1" height="1"/><rect x="52" y="454" width="1" height="1"/><rect x="54" y="454" width="1" height="1"/><rect x="56" y="454" width="1" height="1"/><rect x="58" y="454" width="1" height="1"/><rect x="60" y="454" width="1" height="1"/><rect x="62" y="454" width="1" height="1"/><rect x="52" y="470" width="1" height="1"/><rect x="54" y="470" width="1" height="1"/><rect x="56" y="470" width="1" height="1"/><rect x="58" y="470" width="1" height="1"/><rect x="60" y="470" width="1" height="1"/><rect x="62" y="470" width="1" height="1"/><rect x="33" y="486" width="1" height="1"/><rect x="35" y="486" width="1" height="1"/><rect x="37" y="486" width="1" height="1"/><rect x="39" y="486" width="1" height="1"/><rect x="41" y="486" width="1" height="1"/><rect x="43" y="486" width="1" height="1"/><rect x="39" y="502" width="1" height="1"/><rect x="41" y="502" width="1" height="1"/><rect x="43" y="502" width="1" height="1"/><rect x="52" y="510" width="1" height="1"/><rect x="52" y="512" width="1" height="1"/><rect x="52" y="514" width="1" height="1"/><rect x="52" y="516" width="1" height="1"/><rect x="52" y="518" width="1" height="1"/><rect x="52" y="520" width="1" height="1"/><rect x="52" y="522" width="1" height="1"/><rect x="52" y="524" width="1" height="1"/><rect x="52" y="526" width="1" height="1"/><rect x="52" y="528" width="1" height="1"/><rect x="52" y="530" width="1" height="1"/><rect x="52" y="532" width="1" height="1"/><rect x="52" y="534" width="1" height="1"/><rect x="52" y="536" width="1" height="1"/><rect x="52" y="538" width="1" height="1"/><rect x="52" y="540" width="1" height="1"/><rect x="52" y="542" width="1" height="1"/><rect x="52" y="544" width="1" height="1"/><rect x="52" y="546" width="1" height="1"/><rect x="52" y="548" width="1" height="1"/><rect x="52" y="550" width="1" height="1"/><rect x="52" y="552" width="1" height="1"/><rect x="52" y="554" width="1" height="1"/><rect x="52" y="556" width="1" height="1"/><rect x="52" y="558" width="1" height="1"/><rect x="52" y="560" width="1" height="1"/><rect x="52" y="562" width="1" height="1"/><rect x="52" y="564" width="1" height="1"/><rect x="52" y="566" width="1" height="1"/><rect x="58" y="518" width="1" height="1"/><rect x="60" y="518" width="1" height="1"/><rect x="62" y="518" width="1" height="1"/><rect x="71" y="526" width="1" height="1"/><rect x="71" y="528" width="1" height="1"/><rect x="71" y="530" width="1" height="1"/><rect x="71" y="532" width="1" height="1"/><rect x="71" y="534" width="1" height="1"/><rect x="71" y="536" width="1" height="1"/><rect x="71" y="538" width="1" height="1"/><rect x="71" y="540" width="1" height="1"/><rect x="71" y="542" width="1" height="1"/><rect x="71" y="544" width="1" height="1"/><rect x="71" y="546" width="1" height="1"/><rect x="71" y="548" width="1" height="1"/><rect x="71" y="550" width="1" height="1"/><rect x="71" y="534" width="1" height="1"/><rect x="73" y="534" width="1" height="1"/><rect x="75" y="534" width="1" height="1"/><rect x="77" y="534" width="1" height="1"/><rect x="79" y="534" width="1" height="1"/><rect x="81" y="534" width="1" height="1"/><rect x="71" y="550" width="1" height="1"/><rect x="73" y="550" width="1" height="1"/><rect x="75" y="550" width="1" height="1"/><rect x="77" y="550" width="1" height="1"/><rect x="79" y="550" width="1" height="1"/><rect x="81" y="550" width="1" height="1"/><rect x="52" y="566" width="1" height="1"/><rect x="54" y="566" width="1" height="1"/><rect x="56" y="566" width="1" height="1"/><rect x="58" y="566" width="1" height="1"/><rect x="60" y="566" width="1" height="1"/><rect x="62" y="566" width="1" height="1"/><rect x="39" y="582" width="1" height="1"/><rect x="41" y="582" width="1" height="1"/><rect x="43" y="582" width="1" height="1"/><rect x="52" y="590" width="1" height="1"/><rect x="52" y="592" width="1" height="1"/><rect x="52" y="594" width="1" height="1"/><rect x="52" y="596" width="1" height="1"/><rect x="52" y="598" width="1" height="1"/><rect x="52" y="600" width="1" height="1"/><rect x="52" y="602" width="1" height="1"/><rect x="52" y="604" width="1" height="1"/><rect x="52" y="606" width="1" height="1"/><rect x="52" y="608" width="1" height="1"/><rect x="52" y="610" width="1" height="1"/><rect x="52" y="612" width="1" height="1"/><rect x="52" y="614" width="1" height="1"/><rect x="52" y="616" width="1" height="1"/><rect x="52" y="618" width="1" height="1"/><rect x="52" y="620" width="1" height="1"/><rect x="52" y="622" width="1" height="1"/><rect x="52" y="624" width="1" height="1"/><rect x="52" y="626" width="1" height="1"/><rect x="52" y="628" width="1" height="1"/><rect x="52" y="630" width="1" height="1"/><rect x="52" y="632" width="1" height="1"/><rect x="52" y="634" width="1" height="1"/><rect x="52" y="636" width="1" height="1"/><rect x="52" y="638" width="1" height="1"/><rect x="52" y="640" width="1" height="1"/><rect x="52" y="642" width="1" height="1"/><rect x="52" y="644" width="1" height="1"/><rect x="52" y="646" width="1" height="1"/><rect x="58" y="598" width="1" height="1"/><rect x="60" y="598" width="1" height="1"/><rect x="62" y="598" width="1" height="1"/><rect x="71" y="606" width="1" height="1"/><rect x="71" y="608" width="1" height="1"/><rect x="71" y="610" width="1" height="1"/><rect x="71" y="612" width="1" height="1"/><rect x="71" y="614" width="1" height="1"/><rect x="77" y="614" width="1" height="1"/><rect x="79" y="614" width="1" height="1"/><rect x="81" y="614" width="1" height="1"/><rect x="90" y="622" width="1" height="1"/><rect x="90" y="624" width="1" height="1"/><rect x="90" y="626" width="1" height="1"/><rect x="90" y="628" width="1" height="1"/><rect x="90" y="630" width="1" height="1"/><rect x="90" y="630" width="1" height="1"/><rect x="92" y="630" width="1" height="1"/><rect x="94" y="630" width="1" height="1"/><rect x="96" y="630" width="1" height="1"/><rect x="98" y="630" width="1" height="1"/><rect x="100" y="630" width="1" height="1"/><rect x="58" y="646" width="1" height="1"/><rect x="60" y="646" width="1" height="1"/><rect x="62" y="646" width="1" height="1"/><rect x="33" y="662" width="1" height="1"/><rect x="35" y="662" width="1" height="1"/><rect x="37" y="662" width="1" height="1"/><rect x="39" y="662" width="1" height="1"/><rect x="41" y="662" width="1" height="1"/><rect x="43" y="662" width="1" height="1"/><rect x="39" y="678" width="1" height="1"/><rect x="41" y="678" width="1" height="1"/><rect x="43" y="678" width="1" height="1"/><rect x="52" y="686" width="1" height="1"/><rect x="52" y="688" width="1" height="1"/><rect x="52" y="690" width="1" height="1"/><rect x="52" y="692" width="1" height="1"/><rect x="52" y="694" width="1" height="1"/><rect x="52" y="694" width="1" height="1"/><rect x="54" y="694" width="1" height="1"/><rect x="56" y="694" width="1" height="1"/><rect x="58" y="694" width="1" height="1"/><rect x="60" y="694" width="1" height="1"/><rect x="62" y="694" width="1" height="1"/><rect x="39" y="710" width="1" height="1"/><rect x="41" y="710" width="1" height="1"/><rect x="43" y="710" width="1" height="1"/><rect x="52" y="718" width="1" height="1"/><rect x="52" y="720" width="1" height="1"/><rect x="52" y="722" width="1" height="1"/><rect x="52" y="724" width="1" height="1"/><rect x="52" y="726" width="1" height="1"/><rect x="52" y="728" width="1" height="1"/><rect x="52" y="730" width="1" height="1"/><rect x="52" y="732" width="1" height="1"/><rect x="52" y="734" width="1" height="1"/><rect x="52" y="736" width="1" height="1"/><rect x="52" y="738" width="1" height="1"/><rect x="52" y="740" width="1" height="1"/><rect x="52" y="742" width="1" height="1"/><rect x="58" y="726" width="1" height="1"/><rect x="60" y="726" width="1" height="1"/><rect x="62" y="726" width="1" height="1"/><rect x="52" y="742" width="1" height="1"/><rect x="54" y="742" width="1" height="1"/><rect x="56" y="742" width="1" height="1"/><rect x="58" y="742" width="1" height="1"/><rect x="60" y="742" width="1" height="1"/><rect x="62" y="742" width="1" height="1"/></g></svg>
<svg style="position:absolute;left:9px;top:225px" width="11" height="11"><use href="#expm"/></svg>
<svg style="position:absolute;left:25px;top:222px" width="16" height="16"><use href="#globe"/></svg>
<div style="position:absolute;left:46px;top:224px;font-size:12.6px;line-height:14px;color:#333;white-space:nowrap;font-weight:normal;letter-spacing:0.011px;">Netzwerk - Dashboard</div>
<svg style="position:absolute;left:28px;top:241px" width="11" height="11"><use href="#expp"/></svg>
<svg style="position:absolute;left:44px;top:238px" width="16" height="16"><use href="#hand"/></svg>
<div style="position:absolute;left:65px;top:240px;font-size:12.6px;line-height:14px;color:#333;white-space:nowrap;font-weight:normal;letter-spacing:0.020px;">Nicht zugeordnet</div>
<svg style="position:absolute;left:28px;top:257px" width="11" height="11"><use href="#expp"/></svg>
<svg style="position:absolute;left:44px;top:254px" width="16" height="16"><use href="#book"/></svg>
<div style="position:absolute;left:65px;top:256px;font-size:12.6px;line-height:14px;color:#333;white-space:nowrap;font-weight:normal;letter-spacing:-0.050px;">Alle_Protokolle</div>
<svg style="position:absolute;left:28px;top:273px" width="11" height="11"><use href="#expm"/></svg>
<svg style="position:absolute;left:44px;top:270px" width="16" height="16"><use href="#book"/></svg>
<div style="position:absolute;left:65px;top:272px;font-size:12.6px;line-height:14px;color:#333;white-space:nowrap;font-weight:normal;letter-spacing:0.075px;">Computers</div>
<svg style="position:absolute;left:63px;top:286px" width="16" height="16"><use href="#pc"/></svg>
<div style="position:absolute;left:84px;top:288px;font-size:12.6px;line-height:14px;color:#333;white-space:nowrap;font-weight:normal;letter-spacing:-0.800px;">ANTIPHON</div>
<svg style="position:absolute;left:63px;top:302px" width="16" height="16"><use href="#pc"/></svg>
<div style="position:absolute;left:84px;top:304px;font-size:12.6px;line-height:14px;color:#333;white-space:nowrap;font-weight:normal;letter-spacing:-1.167px;">BION</div>
<svg style="position:absolute;left:63px;top:318px" width="16" height="16"><use href="#pc"/></svg>
<div style="position:absolute;left:84px;top:320px;font-size:12.6px;line-height:14px;color:#333;white-space:nowrap;font-weight:normal;letter-spacing:-0.563px;">FCS-PC126</div>
<svg style="position:absolute;left:63px;top:334px" width="16" height="16"><use href="#pc"/></svg>
<div style="position:absolute;left:84px;top:336px;font-size:12.6px;line-height:14px;color:#333;white-space:nowrap;font-weight:normal;letter-spacing:-0.563px;">FCS-PC130</div>
<svg style="position:absolute;left:63px;top:350px" width="16" height="16"><use href="#pc"/></svg>
<div style="position:absolute;left:84px;top:352px;font-size:12.6px;line-height:14px;color:#333;white-space:nowrap;font-weight:normal;letter-spacing:-0.563px;">FCS-PC136</div>
<svg style="position:absolute;left:63px;top:366px" width="16" height="16"><use href="#pc"/></svg>
<div style="position:absolute;left:84px;top:368px;font-size:12.6px;line-height:14px;color:#333;white-space:nowrap;font-weight:normal;letter-spacing:-0.563px;">FCS-PC137</div>
<svg style="position:absolute;left:63px;top:382px" width="16" height="16"><use href="#pc"/></svg>
<div style="position:absolute;left:84px;top:384px;font-size:12.6px;line-height:14px;color:#333;white-space:nowrap;font-weight:normal;letter-spacing:-0.563px;">FCS-PC168</div>
<svg style="position:absolute;left:63px;top:398px" width="16" height="16"><use href="#pc"/></svg>
<div style="position:absolute;left:84px;top:400px;font-size:12.6px;line-height:14px;color:#333;white-space:nowrap;font-weight:normal;letter-spacing:-0.563px;">FCS-PC184</div>
<svg style="position:absolute;left:44px;top:414px" width="16" height="16"><use href="#book"/></svg>
<div style="position:absolute;left:65px;top:416px;font-size:12.6px;line-height:14px;color:#333;white-space:nowrap;font-weight:normal;letter-spacing:0.023px;">Dateiprotokoll</div>
<svg style="position:absolute;left:28px;top:433px" width="11" height="11"><use href="#expm"/></svg>
<svg style="position:absolute;left:44px;top:430px" width="16" height="16"><use href="#book"/></svg>
<div style="position:absolute;left:65px;top:432px;font-size:12.6px;line-height:14px;color:#333;white-space:nowrap;font-weight:normal;letter-spacing:0.082px;">Domain Controllers</div>
<svg style="position:absolute;left:63px;top:446px" width="16" height="16"><use href="#pc"/></svg>
<div style="position:absolute;left:84px;top:448px;font-size:12.6px;line-height:14px;color:#333;white-space:nowrap;font-weight:normal;letter-spacing:-1.280px;">KELSOS</div>
<svg style="position:absolute;left:63px;top:462px" width="16" height="16"><use href="#pc"/></svg>
<div style="position:absolute;left:84px;top:464px;font-size:12.6px;line-height:14px;color:#333;white-space:nowrap;font-weight:normal;letter-spacing:-0.760px;">PLATON</div>
<svg style="position:absolute;left:44px;top:478px" width="16" height="16"><use href="#book"/></svg>
<div style="position:absolute;left:65px;top:480px;font-size:12.6px;line-height:14px;color:#333;white-space:nowrap;font-weight:normal;letter-spacing:-0.080px;">Entwicklung</div>
<svg style="position:absolute;left:28px;top:497px" width="11" height="11"><use href="#expm"/></svg>
<svg style="position:absolute;left:44px;top:494px" width="16" height="16"><use href="#book"/></svg>
<div style="position:absolute;left:65px;top:496px;font-size:12.6px;line-height:14px;color:#333;white-space:nowrap;font-weight:normal;letter-spacing:0.094px;">Netzwerkprotokoll</div>
<svg style="position:absolute;left:47px;top:513px" width="11" height="11"><use href="#expm"/></svg>
<svg style="position:absolute;left:63px;top:510px" width="16" height="16"><use href="#book"/></svg>
<div style="position:absolute;left:84px;top:512px;font-size:12.6px;line-height:14px;color:#333;white-space:nowrap;font-weight:normal;letter-spacing:-0.012px;">Marketing</div>
<svg style="position:absolute;left:82px;top:526px" width="16" height="16"><use href="#pc"/></svg>
<div style="position:absolute;left:101px;top:526px;width:54px;height:16px;background:#cad3dc;"></div>
<div style="position:absolute;left:103px;top:528px;font-size:12.6px;line-height:14px;color:#333;white-space:nowrap;font-weight:normal;letter-spacing:-0.733px;">FCS-PC2</div>
<svg style="position:absolute;left:82px;top:542px" width="16" height="16"><use href="#pc"/></svg>
<div style="position:absolute;left:103px;top:544px;font-size:12.6px;line-height:14px;color:#333;white-space:nowrap;font-weight:normal;letter-spacing:-0.525px;">FCS-PC232</div>
<svg style="position:absolute;left:63px;top:558px" width="16" height="16"><use href="#pc"/></svg>
<div style="position:absolute;left:84px;top:560px;font-size:12.6px;line-height:14px;color:#333;white-space:nowrap;font-weight:normal;letter-spacing:-0.563px;">FCS-PC175</div>
<svg style="position:absolute;left:28px;top:577px" width="11" height="11"><use href="#expm"/></svg>
<svg style="position:absolute;left:44px;top:574px" width="16" height="16"><use href="#book"/></svg>
<div style="position:absolute;left:65px;top:576px;font-size:12.6px;line-height:14px;color:#333;white-space:nowrap;font-weight:normal;letter-spacing:0.000px;">Nürnberg</div>
<svg style="position:absolute;left:47px;top:593px" width="11" height="11"><use href="#expm"/></svg>
<svg style="position:absolute;left:63px;top:590px" width="16" height="16"><use href="#book"/></svg>
<div style="position:absolute;left:84px;top:592px;font-size:12.6px;line-height:14px;color:#333;white-space:nowrap;font-weight:normal;letter-spacing:-0.211px;">Asset.Desk</div>
<svg style="position:absolute;left:66px;top:609px" width="11" height="11"><use href="#expm"/></svg>
<svg style="position:absolute;left:82px;top:606px" width="16" height="16"><use href="#book"/></svg>
<div style="position:absolute;left:103px;top:608px;font-size:12.6px;line-height:14px;color:#333;white-space:nowrap;font-weight:normal;letter-spacing:-1.550px;">SUB</div>
<svg style="position:absolute;left:101px;top:622px" width="16" height="16"><use href="#pc"/></svg>
<div style="position:absolute;left:122px;top:624px;font-size:12.6px;line-height:14px;color:#333;white-space:nowrap;font-weight:normal;letter-spacing:-0.300px;">SILVIOACTIVE2</div>
<svg style="position:absolute;left:47px;top:641px" width="11" height="11"><use href="#expp"/></svg>
<svg style="position:absolute;left:63px;top:638px" width="16" height="16"><use href="#book"/></svg>
<div style="position:absolute;left:84px;top:640px;font-size:12.6px;line-height:14px;color:#333;white-space:nowrap;font-weight:normal;letter-spacing:0.017px;">Security.Desk</div>
<svg style="position:absolute;left:44px;top:654px" width="16" height="16"><use href="#book"/></svg>
<div style="position:absolute;left:65px;top:656px;font-size:12.6px;line-height:14px;color:#333;white-space:nowrap;font-weight:normal;letter-spacing:0.017px;">Portable Protokolle</div>
<svg style="position:absolute;left:28px;top:673px" width="11" height="11"><use href="#expm"/></svg>
<svg style="position:absolute;left:44px;top:670px" width="16" height="16"><use href="#book"/></svg>
<div style="position:absolute;left:65px;top:672px;font-size:12.6px;line-height:14px;color:#333;white-space:nowrap;font-weight:normal;letter-spacing:0.188px;">Terminal_Protokoll</div>
<svg style="position:absolute;left:63px;top:686px" width="16" height="16"><use href="#server"/></svg>
<div style="position:absolute;left:84px;top:688px;font-size:12.6px;line-height:14px;color:#333;white-space:nowrap;font-weight:normal;letter-spacing:-0.563px;">FCS-PC101</div>
<svg style="position:absolute;left:28px;top:705px" width="11" height="11"><use href="#expm"/></svg>
<svg style="position:absolute;left:44px;top:702px" width="16" height="16"><use href="#book"/></svg>
<div style="position:absolute;left:65px;top:704px;font-size:12.6px;line-height:14px;color:#333;white-space:nowrap;font-weight:normal;letter-spacing:-0.046px;">Update Service</div>
<svg style="position:absolute;left:47px;top:721px" width="11" height="11"><use href="#expp"/></svg>
<svg style="position:absolute;left:63px;top:718px" width="16" height="16"><use href="#book"/></svg>
<div style="position:absolute;left:84px;top:720px;font-size:12.6px;line-height:14px;color:#333;white-space:nowrap;font-weight:normal;letter-spacing:0.019px;">AutoInstall ForcedFriday1500</div>
<svg style="position:absolute;left:63px;top:734px" width="16" height="16"><use href="#pc"/></svg>
<div style="position:absolute;left:84px;top:736px;font-size:12.6px;line-height:14px;color:#333;white-space:nowrap;font-weight:normal;letter-spacing:-0.563px;">FCS-PC185</div>
<div style="position:absolute;left:430px;top:180px;width:1px;height:822px;background:#bdbdbd;"></div>
<div style="position:absolute;left:431px;top:209px;width:1px;height:793px;background:#c4c4c4;"></div>
<div style="position:absolute;left:431px;top:209px;width:1371px;height:1px;background:#bdbdbd;"></div>
<div style="position:absolute;left:738px;top:183px;width:145px;height:27px;box-sizing:border-box;border:1px solid #bdbdbd;background:#f0f0f0;border-bottom:none;"></div>
<svg style="position:absolute;left:446px;top:188px" width="16" height="16"><use href="#t_dev"/></svg>
<div style="position:absolute;left:465px;top:190px;font-size:12.6px;line-height:14px;color:#333;white-space:nowrap;font-weight:normal;letter-spacing:-0.075px;">Gerät</div>
<svg style="position:absolute;left:523px;top:188px" width="16" height="16"><use href="#t_drive"/></svg>
<div style="position:absolute;left:543px;top:190px;font-size:12.6px;line-height:14px;color:#333;white-space:nowrap;font-weight:normal;letter-spacing:0.025px;">Laufwerke</div>
<svg style="position:absolute;left:630px;top:188px" width="16" height="16"><use href="#t_iface"/></svg>
<div style="position:absolute;left:649px;top:190px;font-size:12.6px;line-height:14px;color:#333;white-space:nowrap;font-weight:normal;letter-spacing:0.085px;">Schnittstellen</div>
<svg style="position:absolute;left:752px;top:188px" width="16" height="16"><use href="#t_wech"/></svg>
<div style="position:absolute;left:772px;top:190px;font-size:12.6px;line-height:14px;color:#333;white-space:nowrap;font-weight:normal;letter-spacing:0.021px;">Wechselspeicher</div>
<svg style="position:absolute;left:896px;top:188px" width="16" height="16"><use href="#t_usb"/></svg>
<div style="position:absolute;left:915px;top:190px;font-size:12.6px;line-height:14px;color:#333;white-space:nowrap;font-weight:normal;letter-spacing:-1.700px;">USB</div>
<svg style="position:absolute;left:966px;top:188px" width="16" height="16"><use href="#t_cd"/></svg>
<div style="position:absolute;left:985px;top:190px;font-size:12.6px;line-height:14px;color:#333;white-space:nowrap;font-weight:normal;letter-spacing:-0.780px;">CD/DVD</div>
<svg style="position:absolute;left:1059px;top:188px" width="16" height="16"><use href="#t_port"/></svg>
<div style="position:absolute;left:1077px;top:190px;font-size:12.6px;line-height:14px;color:#333;white-space:nowrap;font-weight:normal;letter-spacing:-0.029px;">Portable</div>
<svg style="position:absolute;left:1152px;top:188px" width="16" height="16"><use href="#t_kontr"/></svg>
<div style="position:absolute;left:1171px;top:190px;font-size:12.6px;line-height:14px;color:#333;white-space:nowrap;font-weight:normal;letter-spacing:-0.195px;">USB Kontrolle (Bad USB)</div>
<div style="position:absolute;left:439px;top:214px;width:1363px;height:781px;box-sizing:border-box;border:1px solid #c8c8c8;background:transparent;"></div>
<div style="position:absolute;left:448px;top:229px;font-size:12.6px;line-height:14px;color:#333;white-space:nowrap;font-weight:normal;letter-spacing:0.175px;">Zeitraum von:</div>
<div style="position:absolute;left:558px;top:223px;width:105px;height:22px;box-sizing:border-box;border:1px solid #a0a0a0;background:#fff;"></div>
<div style="position:absolute;left:642px;top:224px;width:1px;height:20px;background:#a8a8a8;"></div>
<div style="position:absolute;left:643px;top:224px;width:19px;height:20px;background:#f0f0f0;"></div>
<svg style="position:absolute;left:648px;top:231px;" width="7" height="4" viewBox="0 0 7 4"><path d="M0 0h7L3.5 4z" fill="#666"/></svg>
<div style="position:absolute;right:1174px;top:228px;font-size:12.6px;line-height:14px;color:#333;white-space:nowrap;font-weight:normal;letter-spacing:-0.011px;">22.01.2020</div>
<div style="position:absolute;left:691px;top:229px;font-size:12.6px;line-height:14px;color:#333;white-space:nowrap;font-weight:normal;letter-spacing:0.133px;">bis:</div>
<div style="position:absolute;left:725px;top:223px;width:105px;height:22px;box-sizing:border-box;border:1px solid #a0a0a0;background:#fff;"></div>
<div style="position:absolute;left:809px;top:224px;width:1px;height:20px;background:#a8a8a8;"></div>
<div style="position:absolute;left:810px;top:224px;width:19px;height:20px;background:#f0f0f0;"></div>
<svg style="position:absolute;left:815px;top:231px;" width="7" height="4" viewBox="0 0 7 4"><path d="M0 0h7L3.5 4z" fill="#666"/></svg>
<div style="position:absolute;right:1007px;top:228px;font-size:12.6px;line-height:14px;color:#333;white-space:nowrap;font-weight:normal;letter-spacing:-0.033px;">01.02.2021</div>
<div style="position:absolute;left:862px;top:223px;width:99px;height:26px;box-sizing:border-box;border:1px solid #a9a9a9;background:#f0f0f0;"></div>
<div style="position:absolute;left:911px;transform:translateX(-50%);top:230px;font-size:12.6px;line-height:14px;color:#333;white-space:nowrap;font-weight:normal;letter-spacing:-0.360px;">Suchen</div>
<div style="position:absolute;left:445px;top:263px;width:365px;height:366px;box-sizing:border-box;border:1px solid #9a9a9a;background:#f0f0f0;"></div>
<svg style="position:absolute;left:454px;top:270px" width="11" height="11"><use href="#expm"/></svg>
<svg style="position:absolute;left:0px;top:0px;" width="812" height="640" viewBox="0 0 812 640"><g fill="#8a8a8a"><rect x="466" y="274" width="1" height="1"/><rect x="468" y="274" width="1" height="1"/><rect x="478" y="282" width="1" height="1"/><rect x="478" y="284" width="1" height="1"/><rect x="478" y="286" width="1" height="1"/><rect x="478" y="288" width="1" height="1"/><rect x="478" y="290" width="1" height="1"/><rect x="478" y="292" width="1" height="1"/><rect x="478" y="294" width="1" height="1"/><rect x="478" y="296" width="1" height="1"/><rect x="478" y="298" width="1" height="1"/><rect x="478" y="300" width="1" height="1"/><rect x="478" y="302" width="1" height="1"/><rect x="478" y="304" width="1" height="1"/><rect x="478" y="306" width="1" height="1"/><rect x="478" y="308" width="1" height="1"/><rect x="478" y="310" width="1" height="1"/><rect x="478" y="312" width="1" height="1"/><rect x="478" y="314" width="1" height="1"/><rect x="478" y="316" width="1" height="1"/><rect x="478" y="318" width="1" height="1"/><rect x="478" y="320" width="1" height="1"/><rect x="478" y="322" width="1" height="1"/><rect x="478" y="324" width="1" height="1"/><rect x="478" y="326" width="1" height="1"/><rect x="478" y="328" width="1" height="1"/><rect x="480" y="292" width="1" height="1"/><rect x="482" y="292" width="1" height="1"/><rect x="484" y="292" width="1" height="1"/><rect x="486" y="292" width="1" height="1"/><rect x="480" y="310" width="1" height="1"/><rect x="482" y="310" width="1" height="1"/><rect x="484" y="310" width="1" height="1"/><rect x="486" y="310" width="1" height="1"/><rect x="480" y="328" width="1" height="1"/><rect x="482" y="328" width="1" height="1"/><rect x="484" y="328" width="1" height="1"/><rect x="486" y="328" width="1" height="1"/></g></svg>
<div style="position:absolute;left:471px;top:268px;font-size:12.6px;line-height:14px;color:#444;white-space:nowrap;font-weight:normal;letter-spacing:-1.700px;">USB</div>
<div style="position:absolute;left:489px;top:280px;width:319px;height:60px;overflow:hidden">
<div style="position:relative">
<div style="position:absolute;left:1px;top:6px;font-size:12.6px;line-height:14px;color:#111;white-space:nowrap;font-weight:normal;letter-spacing:-0.4px">USB DISK CD USB Device(USBSTOR\DISK&amp;VEN_USB&amp;PROD_DISK_CD</div>
<div style="position:absolute;left:1px;top:24px;font-size:12.6px;line-height:14px;color:#444;white-space:nowrap;font-weight:normal;letter-spacing:-0.18px">USB2.0 FlashDisk USB Device(USB\VID_1307&amp;PID_0165\</div>
<div style="position:absolute;left:1px;top:42px;font-size:12.6px;line-height:14px;color:#444;white-space:nowrap;font-weight:normal;letter-spacing:-0.27px">USB2.0 FlashDisk USB Device(USB\VID_1E3D&amp;PID_2092\</div>
</div></div>
<div style="position:absolute;left:446px;top:607px;width:363px;height:21px;background:#f0f0f0;"></div>
<div style="position:absolute;left:446px;top:606px;width:363px;height:1px;background:#ffffff;"></div>
<div style="position:absolute;left:468px;top:608px;width:169px;height:19px;background:#cdcdcd;"></div>
<svg style="position:absolute;left:451px;top:612px;" width="10" height="11" viewBox="0 0 10 11"><path d="M7 1L2.5 5.5 7 10" stroke="#555" stroke-width="1.8" fill="none"/></svg>
<svg style="position:absolute;left:792px;top:612px;" width="10" height="11" viewBox="0 0 10 11"><path d="M3 1l4.5 4.5L3 10" stroke="#555" stroke-width="1.8" fill="none"/></svg>
<div style="position:absolute;left:818px;top:278px;width:978px;height:352px;box-sizing:border-box;border:1px solid #c8c8c8;background:transparent;"></div>
<div style="position:absolute;left:833px;top:269px;font-size:12.6px;line-height:14px;color:#333;white-space:nowrap;font-weight:normal;letter-spacing:-0.164px;background:#f0f0f0;padding:0 4px 0 5px;margin-left:-5px;">Nutzung mobile Speicher "USB DISK CD USB Device"</div>
<div style="position:absolute;left:824px;top:293px;width:966px;height:331px;box-sizing:border-box;border:1px solid #a6a6a6;background:#fff;"></div>
<div style="position:absolute;left:825px;top:294px;width:964px;height:41px;background:linear-gradient(#efefef,#f4f4f4);"></div>
<div style="position:absolute;left:830px;top:308px;font-size:12.6px;line-height:14px;color:#b0b0b0;white-space:nowrap;font-weight:normal;letter-spacing:0.100px;">Ziehen Sie eine Spalte in diesen Bereich, um nach dieser zu gruppieren</div>
<div style="position:absolute;left:825px;top:334px;width:964px;height:1px;background:#a6a6a6;"></div>
<div style="position:absolute;left:825px;top:335px;width:964px;height:23px;background:#f0f0f0;"></div>
<div style="position:absolute;left:825px;top:358px;width:964px;height:1px;background:#a6a6a6;"></div>
<div style="position:absolute;left:845px;top:335px;width:1px;height:23px;background:#a6a6a6;"></div>
<div style="position:absolute;left:932px;top:335px;width:1px;height:23px;background:#a6a6a6;"></div>
<div style="position:absolute;left:1124px;top:335px;width:1px;height:23px;background:#a6a6a6;"></div>
<div style="position:absolute;left:1287px;top:335px;width:1px;height:23px;background:#a6a6a6;"></div>
<div style="position:absolute;left:1504px;top:335px;width:1px;height:23px;background:#a6a6a6;"></div>
<div style="position:absolute;left:1661px;top:335px;width:1px;height:23px;background:#a6a6a6;"></div>
<div style="position:absolute;left:851px;top:339px;font-size:12.6px;line-height:14px;color:#333;white-space:nowrap;font-weight:normal;letter-spacing:-0.114px;">Benutzer</div>
<div style="position:absolute;left:937px;top:339px;font-size:12.6px;line-height:14px;color:#333;white-space:nowrap;font-weight:normal;letter-spacing:-0.100px;">Von</div>
<div style="position:absolute;left:1130px;top:339px;font-size:12.6px;line-height:14px;color:#333;white-space:nowrap;font-weight:normal;letter-spacing:-0.450px;">Bis</div>
<div style="position:absolute;left:1293px;top:339px;font-size:12.6px;line-height:14px;color:#333;white-space:nowrap;font-weight:normal;letter-spacing:-0.064px;">Berechtigung</div>
<div style="position:absolute;left:1510px;top:339px;font-size:12.6px;line-height:14px;color:#333;white-space:nowrap;font-weight:normal;letter-spacing:-0.140px;">Gruppe</div>
<div style="position:absolute;left:1667px;top:339px;font-size:12.6px;line-height:14px;color:#333;white-space:nowrap;font-weight:normal;">OU</div>
<div style="position:absolute;left:825px;top:359px;width:20px;height:50px;background:#f0f0f0;"></div>
<div style="position:absolute;left:846px;top:359px;width:943px;height:25px;background:#dcdcdc;"></div>
<div style="position:absolute;left:846px;top:384px;width:943px;height:25px;background:#f9f9f9;"></div>
<div style="position:absolute;left:846px;top:408px;width:943px;height:1px;background:#e2e2e2;"></div>
<div style="position:absolute;left:932px;top:359px;width:1px;height:50px;background:#d6d6d6;"></div>
<div style="position:absolute;left:1124px;top:359px;width:1px;height:50px;background:#d6d6d6;"></div>
<div style="position:absolute;left:1287px;top:359px;width:1px;height:50px;background:#d6d6d6;"></div>
<div style="position:absolute;left:1504px;top:359px;width:1px;height:50px;background:#d6d6d6;"></div>
<div style="position:absolute;left:1661px;top:359px;width:1px;height:50px;background:#d6d6d6;"></div>
<div style="position:absolute;left:845px;top:359px;width:1px;height:50px;background:#c0c0c0;"></div>
<div style="position:absolute;left:1288px;top:359px;width:216px;height:25px;background:#ffff00;"></div>
<div style="position:absolute;left:1288px;top:384px;width:216px;height:24px;background:#c0ffc0;"></div>
<svg style="position:absolute;left:833px;top:367px;" width="5" height="8" viewBox="0 0 5 8"><path d="M0.5 0.5L4.5 4L0.5 7.5z" fill="#555"/></svg>
<div style="position:absolute;left:850px;top:365px;font-size:12.6px;line-height:14px;color:#333;white-space:nowrap;font-weight:normal;letter-spacing:-0.245px;">FCS-PC2\b...</div>
<div style="position:absolute;left:937px;top:365px;font-size:12.6px;line-height:14px;color:#333;white-space:nowrap;font-weight:normal;letter-spacing:0.189px;">20.12.2020 16:15:05</div>
<div style="position:absolute;left:1129px;top:365px;font-size:12.6px;line-height:14px;color:#333;white-space:nowrap;font-weight:normal;letter-spacing:0.189px;">22.12.2020 16:16:01</div>
<div style="position:absolute;right:311px;top:365px;font-size:12.6px;line-height:14px;color:#333;white-space:nowrap;font-weight:normal;letter-spacing:0.180px;">Voll / Protokoll</div>
<div style="position:absolute;left:850px;top:390px;font-size:12.6px;line-height:14px;color:#333;white-space:nowrap;font-weight:normal;letter-spacing:-0.245px;">FCS-PC2\b...</div>
<div style="position:absolute;left:937px;top:390px;font-size:12.6px;line-height:14px;color:#333;white-space:nowrap;font-weight:normal;letter-spacing:0.189px;">22.12.2020 16:17:46</div>
<div style="position:absolute;left:1129px;top:390px;font-size:12.6px;line-height:14px;color:#333;white-space:nowrap;font-weight:normal;letter-spacing:0.189px;">22.12.2020 16:20:52</div>
<div style="position:absolute;right:311px;top:390px;font-size:12.6px;line-height:14px;color:#333;white-space:nowrap;font-weight:normal;letter-spacing:0.267px;">Voll</div>
<div style="position:absolute;left:825px;top:602px;width:964px;height:21px;background:#e8e8e8;"></div>
<div style="position:absolute;left:846px;top:602px;width:881px;height:21px;background:#cdcdcd;"></div>
<svg style="position:absolute;left:830px;top:607px;" width="8" height="11" viewBox="0 0 8 11"><path d="M6 1.5L2 5.5 6 9.5" stroke="#777" stroke-width="1.8" fill="none"/></svg>
<svg style="position:absolute;left:1775px;top:607px;" width="8" height="11" viewBox="0 0 8 11"><path d="M2 1.5L6 5.5 2 9.5" stroke="#666" stroke-width="1.8" fill="none"/></svg>
<div style="position:absolute;left:1111px;top:640px;width:2px;height:2px;background:#555;"></div>
<div style="position:absolute;left:1115px;top:640px;width:2px;height:2px;background:#555;"></div>
<div style="position:absolute;left:1119px;top:640px;width:2px;height:2px;background:#555;"></div>
<div style="position:absolute;left:1123px;top:640px;width:2px;height:2px;background:#555;"></div>
<div style="position:absolute;left:1127px;top:640px;width:2px;height:2px;background:#555;"></div>
<div style="position:absolute;left:443px;top:666px;width:1355px;height:325px;box-sizing:border-box;border:1px solid #c8c8c8;background:transparent;"></div>
<div style="position:absolute;left:458px;top:657px;font-size:12.6px;line-height:14px;color:#333;white-space:nowrap;font-weight:normal;letter-spacing:-0.088px;background:#f0f0f0;padding:0 4px 0 5px;margin-left:-5px;">Datei Beobachtung</div>
<div style="position:absolute;left:449px;top:681px;width:1343px;height:274px;box-sizing:border-box;border:1px solid #a6a6a6;background:#fff;"></div>
<div style="position:absolute;left:450px;top:682px;width:1341px;height:40px;background:linear-gradient(#efefef,#f4f4f4);"></div>
<div style="position:absolute;left:455px;top:696px;font-size:12.6px;line-height:14px;color:#b0b0b0;white-space:nowrap;font-weight:normal;letter-spacing:0.100px;">Ziehen Sie eine Spalte in diesen Bereich, um nach dieser zu gruppieren</div>
<div style="position:absolute;left:450px;top:722px;width:1341px;height:1px;background:#a6a6a6;"></div>
<div style="position:absolute;left:450px;top:723px;width:1341px;height:23px;background:#f0f0f0;"></div>
<div style="position:absolute;left:450px;top:746px;width:1341px;height:1px;background:#a6a6a6;"></div>
<div style="position:absolute;left:470px;top:723px;width:1px;height:23px;background:#a6a6a6;"></div>
<div style="position:absolute;left:751px;top:723px;width:1px;height:23px;background:#a6a6a6;"></div>
<div style="position:absolute;left:1046px;top:723px;width:1px;height:23px;background:#a6a6a6;"></div>
<div style="position:absolute;left:1161px;top:723px;width:1px;height:23px;background:#a6a6a6;"></div>
<div style="position:absolute;left:1326px;top:723px;width:1px;height:23px;background:#a6a6a6;"></div>
<div style="position:absolute;left:1499px;top:723px;width:1px;height:23px;background:#a6a6a6;"></div>
<div style="position:absolute;left:476px;top:727px;font-size:12.6px;line-height:14px;color:#333;white-space:nowrap;font-weight:normal;letter-spacing:0.075px;">Anwendung</div>
<div style="position:absolute;left:757px;top:727px;font-size:12.6px;line-height:14px;color:#333;white-space:nowrap;font-weight:normal;letter-spacing:-0.062px;">Dateiname</div>
<div style="position:absolute;left:1052px;top:727px;font-size:12.6px;line-height:14px;color:#333;white-space:nowrap;font-weight:normal;letter-spacing:-0.071px;">Ereignis</div>
<div style="position:absolute;left:1167px;top:727px;font-size:12.6px;line-height:14px;color:#333;white-space:nowrap;font-weight:normal;letter-spacing:-0.075px;">Gerät</div>
<div style="position:absolute;left:1332px;top:727px;font-size:12.6px;line-height:14px;color:#333;white-space:nowrap;font-weight:normal;letter-spacing:-0.055px;">Benutzername</div>
<div style="position:absolute;left:1504px;top:727px;font-size:12.6px;line-height:14px;color:#333;white-space:nowrap;font-weight:normal;letter-spacing:0.090px;">Zeitstempel</div>
<div style="position:absolute;left:450px;top:747px;width:20px;height:175px;background:#f0f0f0;"></div>
<div style="position:absolute;left:470px;top:747px;width:1px;height:175px;background:#c0c0c0;"></div>
<div style="position:absolute;left:471px;top:747px;width:1320px;height:25px;background:#dadada;"></div>
<div style="position:absolute;left:471px;top:771px;width:1320px;height:1px;background:#e0e0e0;"></div>
<div style="position:absolute;left:751px;top:747px;width:1px;height:25px;background:#d8d8d8;"></div>
<div style="position:absolute;left:1046px;top:747px;width:1px;height:25px;background:#d8d8d8;"></div>
<div style="position:absolute;left:1161px;top:747px;width:1px;height:25px;background:#d8d8d8;"></div>
<div style="position:absolute;left:1326px;top:747px;width:1px;height:25px;background:#d8d8d8;"></div>
<div style="position:absolute;left:1499px;top:747px;width:1px;height:25px;background:#d8d8d8;"></div>
<div style="position:absolute;left:1047px;top:747px;width:114px;height:24px;background:#ff4500;"></div>
<div style="position:absolute;left:475px;top:753px;font-size:12.6px;line-height:14px;color:#333;white-space:nowrap;font-weight:normal;letter-spacing:0.155px;">explorer.exe</div>
<div style="position:absolute;left:756px;top:753px;font-size:12.6px;line-height:14px;color:#333;white-space:nowrap;font-weight:normal;letter-spacing:0.038px;">F:\Preisliste_Asset.Desk_1010.pdf</div>
<div style="position:absolute;left:1051px;top:753px;font-size:12.6px;line-height:14px;color:#222;white-space:nowrap;font-weight:normal;letter-spacing:-0.129px;">Erzeugen</div>
<div style="position:absolute;left:1166px;top:753px;font-size:12.6px;line-height:14px;color:#333;white-space:nowrap;font-weight:normal;letter-spacing:-0.500px;">USB DISK CD USB Device</div>
<div style="position:absolute;left:1331px;top:753px;font-size:12.6px;line-height:14px;color:#333;white-space:nowrap;font-weight:normal;letter-spacing:-0.123px;">FCS-PC2\bbrand</div>
<div style="position:absolute;left:1503px;top:753px;font-size:12.6px;line-height:14px;color:#333;white-space:nowrap;font-weight:normal;letter-spacing:0.189px;">22.12.2020 16:56:20</div>
<div style="position:absolute;left:471px;top:772px;width:1320px;height:25px;background:#f9f9f9;"></div>
<div style="position:absolute;left:471px;top:796px;width:1320px;height:1px;background:#e0e0e0;"></div>
<div style="position:absolute;left:751px;top:772px;width:1px;height:25px;background:#d8d8d8;"></div>
<div style="position:absolute;left:1046px;top:772px;width:1px;height:25px;background:#d8d8d8;"></div>
<div style="position:absolute;left:1161px;top:772px;width:1px;height:25px;background:#d8d8d8;"></div>
<div style="position:absolute;left:1326px;top:772px;width:1px;height:25px;background:#d8d8d8;"></div>
<div style="position:absolute;left:1499px;top:772px;width:1px;height:25px;background:#d8d8d8;"></div>
<div style="position:absolute;left:1047px;top:772px;width:114px;height:24px;background:#ff4500;"></div>
<div style="position:absolute;left:475px;top:778px;font-size:12.6px;line-height:14px;color:#333;white-space:nowrap;font-weight:normal;letter-spacing:0.155px;">explorer.exe</div>
<div style="position:absolute;left:756px;top:778px;font-size:12.6px;line-height:14px;color:#333;white-space:nowrap;font-weight:normal;letter-spacing:0.044px;">F:\Preisliste_SecurityDesk_1209.pdf</div>
<div style="position:absolute;left:1051px;top:778px;font-size:12.6px;line-height:14px;color:#222;white-space:nowrap;font-weight:normal;letter-spacing:-0.129px;">Erzeugen</div>
<div style="position:absolute;left:1166px;top:778px;font-size:12.6px;line-height:14px;color:#333;white-space:nowrap;font-weight:normal;letter-spacing:-0.500px;">USB DISK CD USB Device</div>
<div style="position:absolute;left:1331px;top:778px;font-size:12.6px;line-height:14px;color:#333;white-space:nowrap;font-weight:normal;letter-spacing:-0.123px;">FCS-PC2\bbrand</div>
<div style="position:absolute;left:1503px;top:778px;font-size:12.6px;line-height:14px;color:#333;white-space:nowrap;font-weight:normal;letter-spacing:0.189px;">22.12.2020 16:56:41</div>
<div style="position:absolute;left:471px;top:797px;width:1320px;height:25px;background:#efefef;"></div>
<div style="position:absolute;left:471px;top:821px;width:1320px;height:1px;background:#e0e0e0;"></div>
<div style="position:absolute;left:751px;top:797px;width:1px;height:25px;background:#d8d8d8;"></div>
<div style="position:absolute;left:1046px;top:797px;width:1px;height:25px;background:#d8d8d8;"></div>
<div style="position:absolute;left:1161px;top:797px;width:1px;height:25px;background:#d8d8d8;"></div>
<div style="position:absolute;left:1326px;top:797px;width:1px;height:25px;background:#d8d8d8;"></div>
<div style="position:absolute;left:1499px;top:797px;width:1px;height:25px;background:#d8d8d8;"></div>
<div style="position:absolute;left:1047px;top:797px;width:114px;height:24px;background:#ff4500;"></div>
<div style="position:absolute;left:475px;top:803px;font-size:12.6px;line-height:14px;color:#333;white-space:nowrap;font-weight:normal;letter-spacing:0.155px;">explorer.exe</div>
<div style="position:absolute;left:756px;top:803px;font-size:12.6px;line-height:14px;color:#333;white-space:nowrap;font-weight:normal;letter-spacing:0.089px;">F:\FCS_it-sa_Prõsentation.ppt</div>
<div style="position:absolute;left:1051px;top:803px;font-size:12.6px;line-height:14px;color:#222;white-space:nowrap;font-weight:normal;letter-spacing:-0.129px;">Erzeugen</div>
<div style="position:absolute;left:1166px;top:803px;font-size:12.6px;line-height:14px;color:#333;white-space:nowrap;font-weight:normal;letter-spacing:-0.500px;">USB DISK CD USB Device</div>
<div style="position:absolute;left:1331px;top:803px;font-size:12.6px;line-height:14px;color:#333;white-space:nowrap;font-weight:normal;letter-spacing:-0.123px;">FCS-PC2\bbrand</div>
<div style="position:absolute;left:1503px;top:803px;font-size:12.6px;line-height:14px;color:#333;white-space:nowrap;font-weight:normal;letter-spacing:0.189px;">22.12.2020 16:57:54</div>
<div style="position:absolute;left:471px;top:822px;width:1320px;height:25px;background:#f9f9f9;"></div>
<div style="position:absolute;left:471px;top:846px;width:1320px;height:1px;background:#e0e0e0;"></div>
<div style="position:absolute;left:751px;top:822px;width:1px;height:25px;background:#d8d8d8;"></div>
<div style="position:absolute;left:1046px;top:822px;width:1px;height:25px;background:#d8d8d8;"></div>
<div style="position:absolute;left:1161px;top:822px;width:1px;height:25px;background:#d8d8d8;"></div>
<div style="position:absolute;left:1326px;top:822px;width:1px;height:25px;background:#d8d8d8;"></div>
<div style="position:absolute;left:1499px;top:822px;width:1px;height:25px;background:#d8d8d8;"></div>
<div style="position:absolute;left:1047px;top:822px;width:114px;height:24px;background:#ffff00;"></div>
<div style="position:absolute;left:475px;top:828px;font-size:12.6px;line-height:14px;color:#333;white-space:nowrap;font-weight:normal;letter-spacing:0.155px;">explorer.exe</div>
<div style="position:absolute;left:756px;top:828px;font-size:12.6px;line-height:14px;color:#333;white-space:nowrap;font-weight:normal;letter-spacing:0.089px;">F:\FCS_it-sa_Prõsentation.ppt</div>
<div style="position:absolute;left:1051px;top:828px;font-size:12.6px;line-height:14px;color:#222;white-space:nowrap;font-weight:normal;letter-spacing:-0.189px;">Umbenennen</div>
<div style="position:absolute;left:1166px;top:828px;font-size:12.6px;line-height:14px;color:#333;white-space:nowrap;font-weight:normal;letter-spacing:-0.500px;">USB DISK CD USB Device</div>
<div style="position:absolute;left:1331px;top:828px;font-size:12.6px;line-height:14px;color:#333;white-space:nowrap;font-weight:normal;letter-spacing:-0.123px;">FCS-PC2\bbrand</div>
<div style="position:absolute;left:1503px;top:828px;font-size:12.6px;line-height:14px;color:#333;white-space:nowrap;font-weight:normal;letter-spacing:0.189px;">22.12.2020 16:58:10</div>
<div style="position:absolute;left:471px;top:847px;width:1320px;height:25px;background:#efefef;"></div>
<div style="position:absolute;left:471px;top:871px;width:1320px;height:1px;background:#e0e0e0;"></div>
<div style="position:absolute;left:751px;top:847px;width:1px;height:25px;background:#d8d8d8;"></div>
<div style="position:absolute;left:1046px;top:847px;width:1px;height:25px;background:#d8d8d8;"></div>
<div style="position:absolute;left:1161px;top:847px;width:1px;height:25px;background:#d8d8d8;"></div>
<div style="position:absolute;left:1326px;top:847px;width:1px;height:25px;background:#d8d8d8;"></div>
<div style="position:absolute;left:1499px;top:847px;width:1px;height:25px;background:#d8d8d8;"></div>
<div style="position:absolute;left:1047px;top:847px;width:114px;height:24px;background:#ffff00;"></div>
<div style="position:absolute;left:475px;top:853px;font-size:12.6px;line-height:14px;color:#333;white-space:nowrap;font-weight:normal;letter-spacing:0.155px;">explorer.exe</div>
<div style="position:absolute;left:756px;top:853px;font-size:12.6px;line-height:14px;color:#333;white-space:nowrap;font-weight:normal;letter-spacing:-0.096px;">F:\SetupAssetDeskDOTNET.exe</div>
<div style="position:absolute;left:1051px;top:853px;font-size:12.6px;line-height:14px;color:#222;white-space:nowrap;font-weight:normal;letter-spacing:-0.350px;">Löschen</div>
<div style="position:absolute;left:1166px;top:853px;font-size:12.6px;line-height:14px;color:#333;white-space:nowrap;font-weight:normal;letter-spacing:-0.500px;">USB DISK CD USB Device</div>
<div style="position:absolute;left:1331px;top:853px;font-size:12.6px;line-height:14px;color:#333;white-space:nowrap;font-weight:normal;letter-spacing:-0.123px;">FCS-PC2\bbrand</div>
<div style="position:absolute;left:1503px;top:853px;font-size:12.6px;line-height:14px;color:#333;white-space:nowrap;font-weight:normal;letter-spacing:0.189px;">22.12.2020 17:04:02</div>
<div style="position:absolute;left:471px;top:872px;width:1320px;height:25px;background:#f9f9f9;"></div>
<div style="position:absolute;left:471px;top:896px;width:1320px;height:1px;background:#e0e0e0;"></div>
<div style="position:absolute;left:751px;top:872px;width:1px;height:25px;background:#d8d8d8;"></div>
<div style="position:absolute;left:1046px;top:872px;width:1px;height:25px;background:#d8d8d8;"></div>
<div style="position:absolute;left:1161px;top:872px;width:1px;height:25px;background:#d8d8d8;"></div>
<div style="position:absolute;left:1326px;top:872px;width:1px;height:25px;background:#d8d8d8;"></div>
<div style="position:absolute;left:1499px;top:872px;width:1px;height:25px;background:#d8d8d8;"></div>
<div style="position:absolute;left:1047px;top:872px;width:114px;height:24px;background:#ffff00;"></div>
<div style="position:absolute;left:475px;top:878px;font-size:12.6px;line-height:14px;color:#333;white-space:nowrap;font-weight:normal;letter-spacing:0.155px;">explorer.exe</div>
<div style="position:absolute;left:756px;top:878px;font-size:12.6px;line-height:14px;color:#333;white-space:nowrap;font-weight:normal;letter-spacing:-0.029px;">F:\SetupInstallDeskDOTNET.exe</div>
<div style="position:absolute;left:1051px;top:878px;font-size:12.6px;line-height:14px;color:#222;white-space:nowrap;font-weight:normal;letter-spacing:-0.350px;">Löschen</div>
<div style="position:absolute;left:1166px;top:878px;font-size:12.6px;line-height:14px;color:#333;white-space:nowrap;font-weight:normal;letter-spacing:-0.500px;">USB DISK CD USB Device</div>
<div style="position:absolute;left:1331px;top:878px;font-size:12.6px;line-height:14px;color:#333;white-space:nowrap;font-weight:normal;letter-spacing:-0.123px;">FCS-PC2\bbrand</div>
<div style="position:absolute;left:1503px;top:878px;font-size:12.6px;line-height:14px;color:#333;white-space:nowrap;font-weight:normal;letter-spacing:0.189px;">22.12.2020 17:05:02</div>
<div style="position:absolute;left:471px;top:897px;width:1320px;height:25px;background:#efefef;"></div>
<div style="position:absolute;left:471px;top:921px;width:1320px;height:1px;background:#e0e0e0;"></div>
<div style="position:absolute;left:751px;top:897px;width:1px;height:25px;background:#d8d8d8;"></div>
<div style="position:absolute;left:1046px;top:897px;width:1px;height:25px;background:#d8d8d8;"></div>
<div style="position:absolute;left:1161px;top:897px;width:1px;height:25px;background:#d8d8d8;"></div>
<div style="position:absolute;left:1326px;top:897px;width:1px;height:25px;background:#d8d8d8;"></div>
<div style="position:absolute;left:1499px;top:897px;width:1px;height:25px;background:#d8d8d8;"></div>
<div style="position:absolute;left:1047px;top:897px;width:114px;height:24px;background:#ffa500;"></div>
<div style="position:absolute;left:475px;top:903px;font-size:12.6px;line-height:14px;color:#333;white-space:nowrap;font-weight:normal;letter-spacing:0.155px;">explorer.exe</div>
<div style="position:absolute;left:756px;top:903px;font-size:12.6px;line-height:14px;color:#333;white-space:nowrap;font-weight:normal;letter-spacing:0.047px;">F:\Heinzelmann_Handbuch_2.5.pdf</div>
<div style="position:absolute;left:1051px;top:903px;font-size:12.6px;line-height:14px;color:#222;white-space:nowrap;font-weight:normal;letter-spacing:-0.525px;">Holen</div>
<div style="position:absolute;left:1166px;top:903px;font-size:12.6px;line-height:14px;color:#333;white-space:nowrap;font-weight:normal;letter-spacing:-0.500px;">USB DISK CD USB Device</div>
<div style="position:absolute;left:1331px;top:903px;font-size:12.6px;line-height:14px;color:#333;white-space:nowrap;font-weight:normal;letter-spacing:-0.123px;">FCS-PC2\bbrand</div>
<div style="position:absolute;left:1503px;top:903px;font-size:12.6px;line-height:14px;color:#333;white-space:nowrap;font-weight:normal;letter-spacing:0.189px;">22.12.2020 17:24:03</div>
<svg style="position:absolute;left:458px;top:756px;" width="6" height="8" viewBox="0 0 6 8"><path d="M0.5 0.5L4.5 4L0.5 7.5z" fill="#555"/></svg>
<div style="position:absolute;left:450px;top:933px;width:1341px;height:21px;background:#e8e8e8;"></div>
<div style="position:absolute;left:471px;top:933px;width:1106px;height:21px;background:#cdcdcd;"></div>
<svg style="position:absolute;left:455px;top:938px;" width="8" height="11" viewBox="0 0 8 11"><path d="M6 1.5L2 5.5 6 9.5" stroke="#777" stroke-width="1.8" fill="none"/></svg>
<svg style="position:absolute;left:1776px;top:938px;" width="8" height="11" viewBox="0 0 8 11"><path d="M2 1.5L6 5.5 2 9.5" stroke="#666" stroke-width="1.8" fill="none"/></svg>
<div style="position:absolute;left:449px;top:956px;width:1343px;height:1px;background:#c8c8c8;"></div>
<div style="position:absolute;right:26px;top:963px;font-size:14px;line-height:16px;color:#333;white-space:nowrap;font-weight:normal;letter-spacing:0.000px;">Anzahl: 7</div>
<div style="position:absolute;left:0px;top:0px;width:1px;height:38px;background:#7b5548;"></div>
<div style="position:absolute;left:0px;top:38px;width:1px;height:27px;background:#5e3b30;"></div>
<div style="position:absolute;left:0px;top:65px;width:1px;height:940px;background:#606468;"></div>
<div style="position:absolute;left:1809px;top:38px;width:3px;height:967px;background:#6a6a6a;"></div>
<div style="position:absolute;left:0px;top:1004px;width:430px;height:1px;background:#b4b4b4;"></div>
<div style="position:absolute;left:430px;top:1002px;width:1379px;height:3px;background:#b4b4b4;"></div>
</body></html>
